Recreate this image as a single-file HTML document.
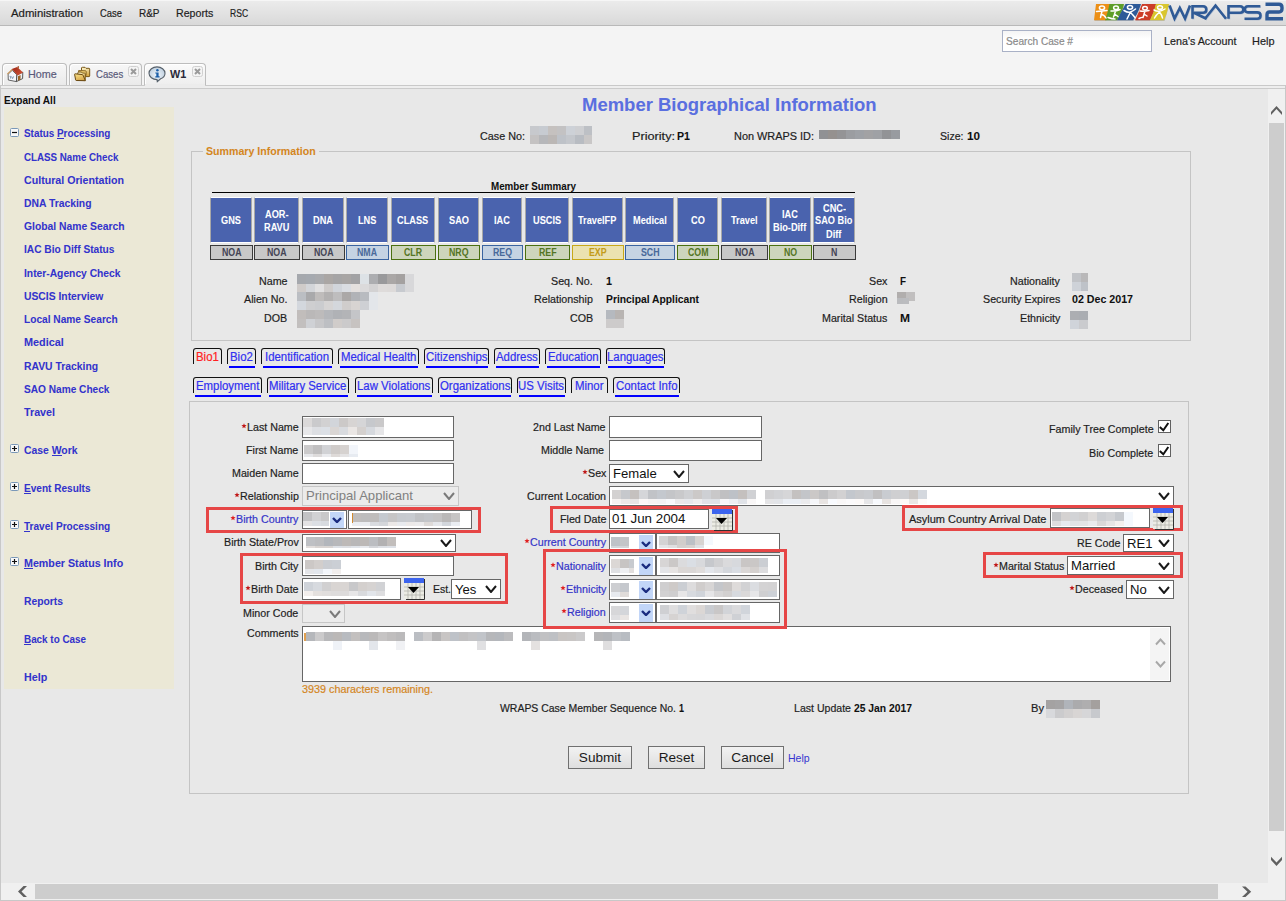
<!DOCTYPE html>
<html><head><meta charset="utf-8"><title>WRAPS</title>
<style>
html,body{margin:0;padding:0;width:1286px;height:901px;overflow:hidden;background:#f4f4f4}
body{position:relative;font-family:"Liberation Sans",sans-serif}
.t{position:absolute;white-space:nowrap;line-height:1;-webkit-text-stroke:0.2px currentColor}
.b{position:absolute;box-sizing:border-box}
</style></head><body>
<div class="b" style="left:0px;top:0px;width:1286px;height:26px;background:linear-gradient(#ececec,#d9d9d9);border-bottom:1px solid #b9b9b9"></div>
<div class="b" style="left:0px;top:0px;width:1286px;height:1px;background:#f6f6f6"></div>
<div class="t" style="left:11.00px;top:8px;font-size:11.5px;color:#1e1e1e;transform:scaleX(0.9882);transform-origin:0 0;">Administration</div>
<div class="t" style="left:100.00px;top:8px;font-size:11.5px;color:#1e1e1e;transform:scaleX(0.8195);transform-origin:0 0;">Case</div>
<div class="t" style="left:138.60px;top:8px;font-size:11.5px;color:#1e1e1e;transform:scaleX(0.8669);transform-origin:0 0;">R&amp;P</div>
<div class="t" style="left:175.70px;top:8px;font-size:11.5px;color:#1e1e1e;transform:scaleX(0.9239);transform-origin:0 0;">Reports</div>
<div class="t" style="left:229.90px;top:8px;font-size:11.5px;color:#1e1e1e;transform:scaleX(0.7454);transform-origin:0 0;">RSC</div>
<div class="b" style="left:0px;top:26px;width:1286px;height:59px;background:#f4f4f4"></div>
<svg class="b" style="left:1090px;top:0px" width="196" height="25" viewBox="0 0 196 25">
<g transform="translate(0.6,0.6)" opacity="0.25"><path d="M6 4 L20 4 Q21.5 8 19.5 12 L16.5 20.3 L4 20.3 Q5 12 6 4 Z M19.5 4 L34 4 L27 20.3 L15 20.3 Z M35.5 4 L51 4 L43 20.3 L27 20.3 Z M52 4 L66 4 L60 20.3 L45 20.3 Z M66 4 L79 4 L74 20.3 L60 20.3 Z" fill="#555"/></g>
<path d="M6 4 L20 4 Q21.5 8 19.5 12 L16.5 20.3 L4 20.3 Q5 12 6 4 Z" fill="#ec8f16"/>
<path d="M19.5 4 L34 4 Q33 9 31 13 L27 20.3 L15 20.3 Q18 12 19.5 4 Z" fill="#5c9d28"/>
<path d="M35.5 4 L51 4 Q49 10 47 14 L43 20.3 L27 20.3 Q31 12 35.5 4 Z" fill="#2d5a98"/>
<path d="M52 4 L66 4 Q65 9 63 14 L60 20.3 L45 20.3 Q49 12 52 4 Z" fill="#cc3d28"/>
<path d="M66 4 L79 4 Q78 9 76.5 14 L74 20.3 L60 20.3 Q64 12 66 4 Z" fill="#d9c62e"/>
<g stroke="#fff" stroke-width="1.5" fill="none" stroke-linecap="round">
<ellipse cx="12" cy="7.8" rx="2.6" ry="1.9"/><path d="M6.5 11.5 Q12 11 17 10.5 M12 11.3 L10.5 17.5 M11 14.5 Q14 14.5 16 18"/>
<ellipse cx="26" cy="7.8" rx="2.4" ry="1.8"/><path d="M21 11 Q26 11.5 30 9.5 M25.5 11.2 L23.5 17 M24.5 14 L28 16.5 M18 17.5 Q22 19 25 19"/>
<ellipse cx="40" cy="7.3" rx="2.6" ry="1.9"/><path d="M34 10.5 Q38 13 40.5 12 Q43 11 45.5 9 M40.5 12 L37 19 M40.5 12.5 Q43 15 45 17.5"/>
<ellipse cx="55" cy="8.3" rx="2.3" ry="1.7"/><path d="M50 11 Q55 11.5 59 10.5 M55 11 L53 17.5 M54 14 L57 16 M49 18.5 Q52 17 53 17.5"/>
<ellipse cx="70" cy="7.5" rx="2.5" ry="1.8"/><path d="M64 10 Q69 13 75 9 M69.5 12 Q66 15 64.5 18 M69.5 12 Q72 15 72.5 18"/>
</g>
<g stroke="#3f6aa6" stroke-width="1" opacity="0.25" fill="none" transform="translate(0.7,0.7)">
<path d="M79.5 5.5 L84.5 18.5 L89.8 8 L95 18.5 L100 5.5 M102.5 18.7 V6.2 H113 Q116.3 6.2 116.3 9.5 Q116.3 12.8 113 12.8 H104 L116.5 18.7 M115 18.7 L125.5 5.5 L136 18.7 M138.5 18.7 V6.2 H150 Q153.3 6.2 153.3 9.5 Q153.3 12.8 150 12.8 H139.5 M170.3 6.2 H158 Q154.8 6.2 154.8 9.4 Q154.8 12.4 158 12.4 H167.2 Q170.5 12.4 170.5 15.5 Q170.5 18.7 167.2 18.7 H154.5" stroke-width="2.2"/>
</g>
<g stroke="#2f5a96" stroke-width="2.6" fill="none" stroke-linejoin="miter">
<path d="M79.5 5.5 L84.5 18.5 L89.8 8 L95 18.5 L100 5.5"/>
<path d="M102.5 18.7 V6.2 H113 Q116.3 6.2 116.3 9.5 Q116.3 12.8 113 12.8 H104 L116.5 18.7"/>
<path d="M115 18.7 L125.5 5.5 L136 18.7"/>
<path d="M138.5 18.7 V6.2 H150 Q153.3 6.2 153.3 9.5 Q153.3 12.8 150 12.8 H139.5"/>
<path d="M170.3 6.2 H158 Q154.8 6.2 154.8 9.4 Q154.8 12.4 158 12.4 H167.2 Q170.5 12.4 170.5 15.5 Q170.5 18.7 167.2 18.7 H154.5"/>
<path d="M175.5 4.3 H189 Q192 4.3 192 7.5 V8.8 Q192 12 189 12 H179.5 Q177 12 177 14.8 V18.8 H193" stroke-width="3.4"/>
</g>
</svg>
<div class="b" style="left:1002px;top:30px;width:150px;height:22px;background:linear-gradient(#f4f4f4,#fff 40%);border:1px solid #a9b1c6;box-sizing:border-box"></div>
<div class="t" style="left:1006.00px;top:36px;font-size:11.5px;color:#8a8a8a;transform:scaleX(0.8808);transform-origin:0 0;">Search Case #</div>
<div class="t" style="left:1163.80px;top:36px;font-size:11.5px;color:#1e1e1e;transform:scaleX(0.9338);transform-origin:0 0;">Lena's Account</div>
<div class="t" style="left:1252.40px;top:36px;font-size:11.5px;color:#1e1e1e;transform:scaleX(0.9514);transform-origin:0 0;">Help</div>
<div class="b" style="left:2px;top:63px;width:65px;height:23px;background:linear-gradient(#f7f7f7,#e9e9e9);border:1px solid #bdbdbd;border-bottom:none;border-radius:4px 4px 0 0;box-sizing:border-box;box-shadow:inset 1px 1px 0 #fff"></div>
<div class="b" style="left:69px;top:63px;width:73px;height:23px;background:linear-gradient(#f7f7f7,#e9e9e9);border:1px solid #bdbdbd;border-bottom:none;border-radius:4px 4px 0 0;box-sizing:border-box;box-shadow:inset 1px 1px 0 #fff"></div>
<div class="b" style="left:144px;top:63px;width:62px;height:23px;background:linear-gradient(#fbfbfb,#ededed);border:1px solid #bdbdbd;border-bottom:none;border-radius:4px 4px 0 0;box-sizing:border-box;box-shadow:inset 1px 1px 0 #fff"></div>
<div class="t" style="left:28.20px;top:69px;font-size:11.5px;color:#5a5a7a;transform:scaleX(0.9389);transform-origin:0 0;">Home</div>
<div class="t" style="left:95.50px;top:69px;font-size:11.5px;color:#5a5a7a;transform:scaleX(0.8345);transform-origin:0 0;">Cases</div>
<div class="t" style="left:169.90px;top:69px;font-size:11.5px;color:#2a2a3a;font-weight:bold;-webkit-text-stroke:0.05px currentColor;transform:scaleX(0.9391);transform-origin:0 0;">W1</div>
<svg class="b" style="left:128px;top:66px" width="11" height="11" viewBox="0 0 11 11"><rect x="0.5" y="0.5" width="10" height="10" rx="2" fill="#f4f4f4" stroke="#d0d0d0"/><path d="M3 3 L8 8 M8 3 L3 8" stroke="#9a9a9a" stroke-width="2"/></svg>
<svg class="b" style="left:192px;top:66px" width="11" height="11" viewBox="0 0 11 11"><rect x="0.5" y="0.5" width="10" height="10" rx="2" fill="#f4f4f4" stroke="#d0d0d0"/><path d="M3 3 L8 8 M8 3 L3 8" stroke="#9a9a9a" stroke-width="2"/></svg>
<svg class="b" style="left:4px;top:63px" width="26" height="22" viewBox="0 0 26 22">
<defs><linearGradient id="roofg" x1="0" y1="0" x2="1" y2="1"><stop offset="0" stop-color="#9c2414"/><stop offset="1" stop-color="#d4583a"/></linearGradient></defs>
<path d="M4.1 11.2 L8.2 7.3 L12.9 11.8 L12.4 18.6 L4.3 17 Z" fill="#f5f7fb" stroke="#555" stroke-width="0.9"/>
<path d="M12.9 11.8 L18.8 9.2 L18.6 15.6 L12.4 18.6 Z" fill="#eef0f4" stroke="#444" stroke-width="0.9"/>
<path d="M14 13.2 L16.6 12 L16.5 16.6 L13.9 17.8 Z" fill="#9a6428"/>
<path d="M2.9 10.7 L7.8 5.9 L8.8 6.8 L3.8 11.6 Z" fill="#c8965c"/>
<path d="M7.8 5.9 L13.2 3.9 L19 9.6 L13.6 12.5 Z" fill="url(#roofg)"/>
<rect x="13.6" y="3.1" width="1.4" height="2.6" fill="#b0643e"/>
<path d="M5.6 13.4 H6.6 V15.6 M7.6 13.4 L8.6 15.6 L9.6 13.4" stroke="#7890a8" stroke-width="0.9" fill="none"/>
</svg>
<svg class="b" style="left:70px;top:63px" width="26" height="22" viewBox="0 0 26 22">
<defs><linearGradient id="fldg" x1="0" y1="0" x2="0.3" y2="1"><stop offset="0" stop-color="#fffbd8"/><stop offset="1" stop-color="#d4a848"/></linearGradient>
<linearGradient id="fldf" x1="0" y1="0" x2="0.4" y2="1"><stop offset="0" stop-color="#fce488"/><stop offset="1" stop-color="#d8aa50"/></linearGradient></defs>
<path d="M11.5 5 Q11.5 4.3 12.3 4.3 L15 4.3 L16 5.3 L19 5.3 Q19.7 5.3 19.7 6 L19.7 13 Q19.7 13.6 19 13.6 L15.5 13.6 L11.5 7 Z" fill="url(#fldg)" stroke="#7a5818" stroke-width="1"/>
<path d="M8.6 7.6 L15.5 7.8 Q16.2 7.9 16.2 8.6 L16 12.5 L9 12 Z" fill="#f4d478" stroke="#7a5818" stroke-width="0.9"/>
<path d="M8 9.6 Q8 9 8.7 9 L11.4 9 L12.4 10 L14.6 10.1 Q15.3 10.1 15.3 10.8 L15.2 17.6 L6 17.2 Z" fill="url(#fldg)" stroke="#7a5818" stroke-width="1"/>
<path d="M4.6 11.3 Q4.6 10.8 5.2 10.8 L12.2 11.6 Q12.9 11.7 13.1 12.3 L15.3 17.7 L6.5 17.5 Q5.8 17.5 5.6 16.8 Z" fill="url(#fldf)" stroke="#6a4a14" stroke-width="1"/>
</svg>
<svg class="b" style="left:148px;top:66px" width="19" height="17" viewBox="0 0 19 17">
<defs><radialGradient id="infg" cx="0.5" cy="0.55" r="0.6"><stop offset="0" stop-color="#f0f5fa"/><stop offset="1" stop-color="#b8cadb"/></radialGradient></defs>
<path d="M9 13.6 C4.6 13.6 1 10.8 1 7.3 C1 3.8 4.6 0.9 9 0.9 C13.4 0.9 17 3.8 17 7.3 C17 9.8 15.2 11.9 12.6 12.8 L9.3 15.6 Z" fill="url(#infg)" stroke="#56606a" stroke-width="1.1"/>
<circle cx="9.4" cy="4.3" r="1.25" fill="#1a5ea8"/>
<path d="M7.3 6.4 L10.6 6.4 L10.6 10.3 L11.6 10.3 L11.6 11.4 L7.3 11.4 L7.3 10.3 L8.3 10.3 L8.3 7.4 L7.3 7.4 Z" fill="#1a5ea8"/>
</svg>
<div class="b" style="left:0px;top:85px;width:1286px;height:816px;background:#e8e8e8"></div>
<div class="b" style="left:0px;top:85px;width:1286px;height:1px;background:#c9c9c9"></div>
<div class="b" style="left:0px;top:86px;width:1286px;height:2px;background:#eeeeee"></div>
<div class="b" style="left:0px;top:88px;width:1286px;height:1px;background:#cbcbcb"></div>
<div class="b" style="left:0px;top:85px;width:1px;height:816px;background:#c8c8c8"></div>
<div class="b" style="left:1285px;top:85px;width:1px;height:816px;background:#c8c8c8"></div>
<div class="b" style="left:0px;top:900px;width:1286px;height:1px;background:#c8c8c8"></div>
<div class="b" style="left:145px;top:84px;width:60px;height:4px;background:#ececec"></div>
<div class="b" style="left:1268px;top:89px;width:17px;height:794px;background:#f0f0f0"></div>
<div class="b" style="left:1269px;top:123px;width:15px;height:708px;background:#cdcdcd"></div>
<svg class="b" style="left:1268px;top:100px" width="17" height="17" viewBox="0 0 17 17"><path d="M3 12 L8.5 6 L14 12 L14 15 L8.5 9 L3 15 Z" fill="#606060"/></svg>
<svg class="b" style="left:1268px;top:852px" width="17" height="17" viewBox="0 0 17 17"><path d="M3 4.7 L8.5 10.5 L14 4.7 L14 8 L8.5 14 L3 8 Z" fill="#606060"/></svg>
<div class="b" style="left:1px;top:883px;width:1267px;height:17px;background:#f0f0f0"></div>
<div class="b" style="left:35px;top:884px;width:1183px;height:15px;background:#cdcdcd"></div>
<svg class="b" style="left:14px;top:883px" width="17" height="17" viewBox="0 0 17 17"><path d="M13 3 L9.5 3 L4 8.5 L9.5 14 L13 14 L7.5 8.5 Z" fill="#606060"/></svg>
<svg class="b" style="left:1238px;top:883px" width="17" height="17" viewBox="0 0 17 17"><path d="M4 3.5 L7.5 3.5 L13.2 8.7 L7.5 14 L4 14 L9.5 8.7 Z" fill="#606060"/></svg>
<div class="b" style="left:1268px;top:883px;width:17px;height:17px;background:#f0f0f0"></div>
<div class="t" style="left:4.30px;top:95px;font-size:11.5px;color:#101010;font-weight:bold;-webkit-text-stroke:0.05px currentColor;transform:scaleX(0.8763);transform-origin:0 0;">Expand All</div>
<div class="b" style="left:4px;top:107px;width:170px;height:582px;background:#ebe8d6"></div>
<div class="t" style="left:24.00px;top:128px;font-size:11px;color:#3333cc;font-weight:bold;-webkit-text-stroke:0.05px currentColor;transform:scaleX(0.8992);transform-origin:0 0;">Status Processing</div>
<svg class="b" style="left:10px;top:128px" width="9" height="9" viewBox="0 0 9 9"><rect x="0.5" y="0.5" width="8" height="8" rx="1" fill="#f8f8f8" stroke="#7a98b8"/><path d="M2 4.5 H7" stroke="#101010" stroke-width="1.2"/></svg>
<div class="b" style="left:57px;top:138px;width:7px;height:1px;background:#3333cc"></div>
<div class="t" style="left:24.00px;top:152px;font-size:11px;color:#3333cc;font-weight:bold;-webkit-text-stroke:0.05px currentColor;transform:scaleX(0.8866);transform-origin:0 0;">CLASS Name Check</div>
<div class="t" style="left:24.00px;top:175px;font-size:11px;color:#3333cc;font-weight:bold;-webkit-text-stroke:0.05px currentColor;transform:scaleX(0.9673);transform-origin:0 0;">Cultural Orientation</div>
<div class="t" style="left:24.00px;top:198px;font-size:11px;color:#3333cc;font-weight:bold;-webkit-text-stroke:0.05px currentColor;transform:scaleX(0.9412);transform-origin:0 0;">DNA Tracking</div>
<div class="t" style="left:24.00px;top:221px;font-size:11px;color:#3333cc;font-weight:bold;-webkit-text-stroke:0.05px currentColor;transform:scaleX(0.9403);transform-origin:0 0;">Global Name Search</div>
<div class="t" style="left:24.00px;top:244px;font-size:11px;color:#3333cc;font-weight:bold;-webkit-text-stroke:0.05px currentColor;transform:scaleX(0.9256);transform-origin:0 0;">IAC Bio Diff Status</div>
<div class="t" style="left:24.00px;top:268px;font-size:11px;color:#3333cc;font-weight:bold;-webkit-text-stroke:0.05px currentColor;transform:scaleX(0.9342);transform-origin:0 0;">Inter-Agency Check</div>
<div class="t" style="left:24.00px;top:291px;font-size:11px;color:#3333cc;font-weight:bold;-webkit-text-stroke:0.05px currentColor;transform:scaleX(0.9401);transform-origin:0 0;">USCIS Interview</div>
<div class="t" style="left:24.00px;top:314px;font-size:11px;color:#3333cc;font-weight:bold;-webkit-text-stroke:0.05px currentColor;transform:scaleX(0.9233);transform-origin:0 0;">Local Name Search</div>
<div class="t" style="left:24.00px;top:337px;font-size:11px;color:#3333cc;font-weight:bold;-webkit-text-stroke:0.05px currentColor;transform:scaleX(0.9865);transform-origin:0 0;">Medical</div>
<div class="t" style="left:24.00px;top:361px;font-size:11px;color:#3333cc;font-weight:bold;-webkit-text-stroke:0.05px currentColor;transform:scaleX(0.9422);transform-origin:0 0;">RAVU Tracking</div>
<div class="t" style="left:24.00px;top:384px;font-size:11px;color:#3333cc;font-weight:bold;-webkit-text-stroke:0.05px currentColor;transform:scaleX(0.9201);transform-origin:0 0;">SAO Name Check</div>
<div class="t" style="left:24.00px;top:407px;font-size:11px;color:#3333cc;font-weight:bold;-webkit-text-stroke:0.05px currentColor;transform:scaleX(0.9748);transform-origin:0 0;">Travel</div>
<div class="t" style="left:24.00px;top:445px;font-size:11px;color:#3333cc;font-weight:bold;-webkit-text-stroke:0.05px currentColor;transform:scaleX(0.9444);transform-origin:0 0;">Case Work</div>
<svg class="b" style="left:10px;top:444px" width="9" height="9" viewBox="0 0 9 9"><rect x="0.5" y="0.5" width="8" height="8" rx="1" fill="#f8f8f8" stroke="#7a98b8"/><path d="M2 4.5 H7 M4.5 2 V7" stroke="#101010" stroke-width="1.2"/></svg>
<div class="b" style="left:52px;top:455px;width:10px;height:1px;background:#3333cc"></div>
<div class="t" style="left:24.00px;top:483px;font-size:11px;color:#3333cc;font-weight:bold;-webkit-text-stroke:0.05px currentColor;transform:scaleX(0.9142);transform-origin:0 0;">Event Results</div>
<svg class="b" style="left:10px;top:482px" width="9" height="9" viewBox="0 0 9 9"><rect x="0.5" y="0.5" width="8" height="8" rx="1" fill="#f8f8f8" stroke="#7a98b8"/><path d="M2 4.5 H7 M4.5 2 V7" stroke="#101010" stroke-width="1.2"/></svg>
<div class="b" style="left:24px;top:493px;width:7px;height:1px;background:#3333cc"></div>
<div class="t" style="left:24.00px;top:521px;font-size:11px;color:#3333cc;font-weight:bold;-webkit-text-stroke:0.05px currentColor;transform:scaleX(0.9155);transform-origin:0 0;">Travel Processing</div>
<svg class="b" style="left:10px;top:520px" width="9" height="9" viewBox="0 0 9 9"><rect x="0.5" y="0.5" width="8" height="8" rx="1" fill="#f8f8f8" stroke="#7a98b8"/><path d="M2 4.5 H7 M4.5 2 V7" stroke="#101010" stroke-width="1.2"/></svg>
<div class="b" style="left:24px;top:531px;width:6px;height:1px;background:#3333cc"></div>
<div class="t" style="left:24.00px;top:558px;font-size:11px;color:#3333cc;font-weight:bold;-webkit-text-stroke:0.05px currentColor;transform:scaleX(0.9720);transform-origin:0 0;">Member Status Info</div>
<svg class="b" style="left:10px;top:557px" width="9" height="9" viewBox="0 0 9 9"><rect x="0.5" y="0.5" width="8" height="8" rx="1" fill="#f8f8f8" stroke="#7a98b8"/><path d="M2 4.5 H7 M4.5 2 V7" stroke="#101010" stroke-width="1.2"/></svg>
<div class="b" style="left:24px;top:568px;width:9px;height:1px;background:#3333cc"></div>
<div class="t" style="left:24.00px;top:596px;font-size:11px;color:#3333cc;font-weight:bold;-webkit-text-stroke:0.05px currentColor;transform:scaleX(0.9384);transform-origin:0 0;">Reports</div>
<div class="t" style="left:24.00px;top:634px;font-size:11px;color:#3333cc;font-weight:bold;-webkit-text-stroke:0.05px currentColor;transform:scaleX(0.8975);transform-origin:0 0;">Back to Case</div>
<div class="b" style="left:24px;top:644px;width:7px;height:1px;background:#3333cc"></div>
<div class="t" style="left:24.00px;top:672px;font-size:11px;color:#3333cc;font-weight:bold;-webkit-text-stroke:0.05px currentColor;transform:scaleX(0.9733);transform-origin:0 0;">Help</div>
<div class="t" style="left:582.40px;top:95px;font-size:19px;color:#5a6fe0;font-weight:bold;-webkit-text-stroke:0.05px currentColor;transform:scaleX(0.9724);transform-origin:0 0;">Member Biographical Information</div>
<div class="t" style="left:480.00px;top:131px;font-size:11.5px;color:#1e1e1e;transform:scaleX(0.9388);transform-origin:0 0;">Case No:</div>
<div class="b" style="left:530px;top:126px;width:9px;height:9px;background:#c7c9cd"></div>
<div class="b" style="left:539px;top:126px;width:9px;height:9px;background:#c7cbd1"></div>
<div class="b" style="left:548px;top:126px;width:9px;height:9px;background:#c5c1bf"></div>
<div class="b" style="left:557px;top:126px;width:9px;height:9px;background:#c3c2c3"></div>
<div class="b" style="left:566px;top:126px;width:9px;height:9px;background:#cdd1d7"></div>
<div class="b" style="left:575px;top:126px;width:9px;height:9px;background:#cecfd2"></div>
<div class="b" style="left:584px;top:126px;width:8px;height:9px;background:#bdc0c5"></div>
<div class="b" style="left:530px;top:135px;width:9px;height:9px;background:#c4c2c2"></div>
<div class="b" style="left:539px;top:135px;width:9px;height:9px;background:#b6b7ba"></div>
<div class="b" style="left:548px;top:135px;width:9px;height:9px;background:#bbb7b5"></div>
<div class="b" style="left:557px;top:135px;width:9px;height:9px;background:#bec2c8"></div>
<div class="b" style="left:566px;top:135px;width:9px;height:9px;background:#c4c7cc"></div>
<div class="b" style="left:575px;top:135px;width:9px;height:9px;background:#b8bcc2"></div>
<div class="b" style="left:584px;top:135px;width:8px;height:9px;background:#c9c7c7"></div>
<div class="t" style="left:631.60px;top:131px;font-size:11.5px;color:#1e1e1e;transform:scaleX(1.1033);transform-origin:0 0;">Priority:</div>
<div class="t" style="left:677.00px;top:131px;font-size:11.5px;color:#101010;font-weight:bold;-webkit-text-stroke:0.05px currentColor;transform:scaleX(0.9242);transform-origin:0 0;">P1</div>
<div class="t" style="left:733.50px;top:131px;font-size:11.5px;color:#1e1e1e;transform:scaleX(0.9484);transform-origin:0 0;">Non WRAPS ID:</div>
<div class="b" style="left:819px;top:130px;width:9px;height:9px;background:#909194"></div>
<div class="b" style="left:828px;top:130px;width:9px;height:9px;background:#95918f"></div>
<div class="b" style="left:837px;top:130px;width:9px;height:9px;background:#949496"></div>
<div class="b" style="left:846px;top:130px;width:9px;height:9px;background:#9b9da1"></div>
<div class="b" style="left:855px;top:130px;width:9px;height:9px;background:#9ea1a6"></div>
<div class="b" style="left:864px;top:130px;width:9px;height:9px;background:#a2a2a4"></div>
<div class="b" style="left:873px;top:130px;width:9px;height:9px;background:#9fa1a5"></div>
<div class="b" style="left:882px;top:130px;width:9px;height:9px;background:#929396"></div>
<div class="b" style="left:891px;top:130px;width:9px;height:9px;background:#989ba0"></div>
<div class="t" style="left:940.00px;top:131px;font-size:11.5px;color:#1e1e1e;transform:scaleX(0.9192);transform-origin:0 0;">Size:</div>
<div class="t" style="left:967.00px;top:131px;font-size:11.5px;color:#101010;font-weight:bold;-webkit-text-stroke:0.05px currentColor;transform:scaleX(1.0164);transform-origin:0 0;">10</div>
<div class="b" style="left:191px;top:151px;width:1000px;height:190px;border:1px solid #c4c4c4"></div>
<div class="b" style="left:203px;top:145px;width:116px;height:13px;background:#e8e8e8"></div>
<div class="t" style="left:206.00px;top:146px;font-size:11.5px;color:#d4861e;font-weight:bold;-webkit-text-stroke:0.05px currentColor;transform:scaleX(0.9222);transform-origin:0 0;">Summary Information</div>
<div class="t" style="left:490.70px;top:182px;font-size:10px;color:#101010;font-weight:bold;-webkit-text-stroke:0.05px currentColor;transform:scaleX(0.9804);transform-origin:0 0;">Member Summary</div>
<div class="b" style="left:212px;top:192px;width:643px;height:1px;background:#000"></div>
<div class="b" style="left:210px;top:197px;width:42px;height:46px;background:#4a63ae;border-left:1px solid #a8a8a8;border-right:1px solid #a8a8a8;border-top:1px solid #fff;border-bottom:1px solid #fff"></div>
<div class="t" style="left:221.03px;top:216px;font-size:10px;color:#ffffff;font-weight:bold;-webkit-text-stroke:0.05px currentColor;transform:scaleX(0.9200);transform-origin:0 0;">GNS</div>
<div class="b" style="left:210px;top:245px;width:43px;height:15px;background:#c8c8c8;border:1px solid #3a3a3a"></div>
<div class="t" style="left:221.72px;top:248px;font-size:10px;color:#444454;font-weight:bold;-webkit-text-stroke:0.05px currentColor;transform:scaleX(0.8800);transform-origin:0 0;">NOA</div>
<div class="b" style="left:254px;top:197px;width:45px;height:46px;background:#4a63ae;border-left:1px solid #a8a8a8;border-right:1px solid #a8a8a8;border-top:1px solid #fff;border-bottom:1px solid #fff"></div>
<div class="t" style="left:264.75px;top:210px;font-size:10px;color:#ffffff;font-weight:bold;-webkit-text-stroke:0.05px currentColor;transform:scaleX(0.9200);transform-origin:0 0;">AOR-</div>
<div class="t" style="left:263.81px;top:223px;font-size:10px;color:#ffffff;font-weight:bold;-webkit-text-stroke:0.05px currentColor;transform:scaleX(0.9200);transform-origin:0 0;">RAVU</div>
<div class="b" style="left:254px;top:245px;width:46px;height:15px;background:#c8c8c8;border:1px solid #3a3a3a"></div>
<div class="t" style="left:267.22px;top:248px;font-size:10px;color:#444454;font-weight:bold;-webkit-text-stroke:0.05px currentColor;transform:scaleX(0.8800);transform-origin:0 0;">NOA</div>
<div class="b" style="left:302px;top:197px;width:42px;height:46px;background:#4a63ae;border-left:1px solid #a8a8a8;border-right:1px solid #a8a8a8;border-top:1px solid #fff;border-bottom:1px solid #fff"></div>
<div class="t" style="left:313.03px;top:216px;font-size:10px;color:#ffffff;font-weight:bold;-webkit-text-stroke:0.05px currentColor;transform:scaleX(0.9200);transform-origin:0 0;">DNA</div>
<div class="b" style="left:302px;top:245px;width:43px;height:15px;background:#c8c8c8;border:1px solid #3a3a3a"></div>
<div class="t" style="left:313.72px;top:248px;font-size:10px;color:#444454;font-weight:bold;-webkit-text-stroke:0.05px currentColor;transform:scaleX(0.8800);transform-origin:0 0;">NOA</div>
<div class="b" style="left:346px;top:197px;width:42px;height:46px;background:#4a63ae;border-left:1px solid #a8a8a8;border-right:1px solid #a8a8a8;border-top:1px solid #fff;border-bottom:1px solid #fff"></div>
<div class="t" style="left:357.80px;top:216px;font-size:10px;color:#ffffff;font-weight:bold;-webkit-text-stroke:0.05px currentColor;transform:scaleX(0.9200);transform-origin:0 0;">LNS</div>
<div class="b" style="left:346px;top:245px;width:43px;height:15px;background:#c5d3e3;border:1px solid #3a64a0"></div>
<div class="t" style="left:357.48px;top:248px;font-size:10px;color:#4a6a9a;font-weight:bold;-webkit-text-stroke:0.05px currentColor;transform:scaleX(0.8800);transform-origin:0 0;">NMA</div>
<div class="b" style="left:391px;top:197px;width:44px;height:46px;background:#4a63ae;border-left:1px solid #a8a8a8;border-right:1px solid #a8a8a8;border-top:1px solid #fff;border-bottom:1px solid #fff"></div>
<div class="t" style="left:397.41px;top:216px;font-size:10px;color:#ffffff;font-weight:bold;-webkit-text-stroke:0.05px currentColor;transform:scaleX(0.9200);transform-origin:0 0;">CLASS</div>
<div class="b" style="left:391px;top:245px;width:45px;height:15px;background:#cdd5bc;border:1px solid #4a7010"></div>
<div class="t" style="left:404.46px;top:248px;font-size:10px;color:#557525;font-weight:bold;-webkit-text-stroke:0.05px currentColor;transform:scaleX(0.8800);transform-origin:0 0;">CLR</div>
<div class="b" style="left:438px;top:197px;width:41px;height:46px;background:#4a63ae;border-left:1px solid #a8a8a8;border-right:1px solid #a8a8a8;border-top:1px solid #fff;border-bottom:1px solid #fff"></div>
<div class="t" style="left:448.53px;top:216px;font-size:10px;color:#ffffff;font-weight:bold;-webkit-text-stroke:0.05px currentColor;transform:scaleX(0.9200);transform-origin:0 0;">SAO</div>
<div class="b" style="left:438px;top:245px;width:42px;height:15px;background:#cdd5bc;border:1px solid #4a7010"></div>
<div class="t" style="left:449.22px;top:248px;font-size:10px;color:#557525;font-weight:bold;-webkit-text-stroke:0.05px currentColor;transform:scaleX(0.8800);transform-origin:0 0;">NRQ</div>
<div class="b" style="left:482px;top:197px;width:40px;height:46px;background:#4a63ae;border-left:1px solid #a8a8a8;border-right:1px solid #a8a8a8;border-top:1px solid #fff;border-bottom:1px solid #fff"></div>
<div class="t" style="left:494.08px;top:216px;font-size:10px;color:#ffffff;font-weight:bold;-webkit-text-stroke:0.05px currentColor;transform:scaleX(0.9200);transform-origin:0 0;">IAC</div>
<div class="b" style="left:482px;top:245px;width:41px;height:15px;background:#c5d3e3;border:1px solid #3a64a0"></div>
<div class="t" style="left:492.97px;top:248px;font-size:10px;color:#4a6a9a;font-weight:bold;-webkit-text-stroke:0.05px currentColor;transform:scaleX(0.8800);transform-origin:0 0;">REQ</div>
<div class="b" style="left:525px;top:197px;width:44px;height:46px;background:#4a63ae;border-left:1px solid #a8a8a8;border-right:1px solid #a8a8a8;border-top:1px solid #fff;border-bottom:1px solid #fff"></div>
<div class="t" style="left:532.94px;top:216px;font-size:10px;color:#ffffff;font-weight:bold;-webkit-text-stroke:0.05px currentColor;transform:scaleX(0.9200);transform-origin:0 0;">USCIS</div>
<div class="b" style="left:525px;top:245px;width:45px;height:15px;background:#cdd5bc;border:1px solid #4a7010"></div>
<div class="t" style="left:538.70px;top:248px;font-size:10px;color:#557525;font-weight:bold;-webkit-text-stroke:0.05px currentColor;transform:scaleX(0.8800);transform-origin:0 0;">REF</div>
<div class="b" style="left:572px;top:197px;width:51px;height:46px;background:#4a63ae;border-left:1px solid #a8a8a8;border-right:1px solid #a8a8a8;border-top:1px solid #fff;border-bottom:1px solid #fff"></div>
<div class="t" style="left:578.32px;top:216px;font-size:10px;color:#ffffff;font-weight:bold;-webkit-text-stroke:0.05px currentColor;transform:scaleX(0.9200);transform-origin:0 0;">TravelFP</div>
<div class="b" style="left:572px;top:245px;width:52px;height:15px;background:#ebe2b0;border:1px solid #c8a818"></div>
<div class="t" style="left:589.20px;top:248px;font-size:10px;color:#c49c18;font-weight:bold;-webkit-text-stroke:0.05px currentColor;transform:scaleX(0.8800);transform-origin:0 0;">EXP</div>
<div class="b" style="left:625px;top:197px;width:49px;height:46px;background:#4a63ae;border-left:1px solid #a8a8a8;border-right:1px solid #a8a8a8;border-top:1px solid #fff;border-bottom:1px solid #fff"></div>
<div class="t" style="left:632.63px;top:216px;font-size:10px;color:#ffffff;font-weight:bold;-webkit-text-stroke:0.05px currentColor;transform:scaleX(0.9200);transform-origin:0 0;">Medical</div>
<div class="b" style="left:625px;top:245px;width:50px;height:15px;background:#c5d3e3;border:1px solid #3a64a0"></div>
<div class="t" style="left:640.71px;top:248px;font-size:10px;color:#4a6a9a;font-weight:bold;-webkit-text-stroke:0.05px currentColor;transform:scaleX(0.8800);transform-origin:0 0;">SCH</div>
<div class="b" style="left:677px;top:197px;width:41px;height:46px;background:#4a63ae;border-left:1px solid #a8a8a8;border-right:1px solid #a8a8a8;border-top:1px solid #fff;border-bottom:1px solid #fff"></div>
<div class="t" style="left:690.60px;top:216px;font-size:10px;color:#ffffff;font-weight:bold;-webkit-text-stroke:0.05px currentColor;transform:scaleX(0.9200);transform-origin:0 0;">CO</div>
<div class="b" style="left:677px;top:245px;width:42px;height:15px;background:#cdd5bc;border:1px solid #4a7010"></div>
<div class="t" style="left:687.73px;top:248px;font-size:10px;color:#557525;font-weight:bold;-webkit-text-stroke:0.05px currentColor;transform:scaleX(0.8800);transform-origin:0 0;">COM</div>
<div class="b" style="left:721px;top:197px;width:46px;height:46px;background:#4a63ae;border-left:1px solid #a8a8a8;border-right:1px solid #a8a8a8;border-top:1px solid #fff;border-bottom:1px solid #fff"></div>
<div class="t" style="left:730.70px;top:216px;font-size:10px;color:#ffffff;font-weight:bold;-webkit-text-stroke:0.05px currentColor;transform:scaleX(0.9200);transform-origin:0 0;">Travel</div>
<div class="b" style="left:721px;top:245px;width:47px;height:15px;background:#c8c8c8;border:1px solid #3a3a3a"></div>
<div class="t" style="left:734.72px;top:248px;font-size:10px;color:#444454;font-weight:bold;-webkit-text-stroke:0.05px currentColor;transform:scaleX(0.8800);transform-origin:0 0;">NOA</div>
<div class="b" style="left:769px;top:197px;width:42px;height:46px;background:#4a63ae;border-left:1px solid #a8a8a8;border-right:1px solid #a8a8a8;border-top:1px solid #fff;border-bottom:1px solid #fff"></div>
<div class="t" style="left:782.08px;top:210px;font-size:10px;color:#ffffff;font-weight:bold;-webkit-text-stroke:0.05px currentColor;transform:scaleX(0.9200);transform-origin:0 0;">IAC</div>
<div class="t" style="left:773.40px;top:223px;font-size:10px;color:#ffffff;font-weight:bold;-webkit-text-stroke:0.05px currentColor;transform:scaleX(0.9200);transform-origin:0 0;">Bio-Diff</div>
<div class="b" style="left:769px;top:245px;width:43px;height:15px;background:#cdd5bc;border:1px solid #4a7010"></div>
<div class="t" style="left:783.90px;top:248px;font-size:10px;color:#557525;font-weight:bold;-webkit-text-stroke:0.05px currentColor;transform:scaleX(0.8800);transform-origin:0 0;">NO</div>
<div class="b" style="left:813px;top:197px;width:42px;height:46px;background:#4a63ae;border-left:1px solid #a8a8a8;border-right:1px solid #a8a8a8;border-top:1px solid #fff;border-bottom:1px solid #fff"></div>
<div class="t" style="left:822.50px;top:204px;font-size:10px;color:#ffffff;font-weight:bold;-webkit-text-stroke:0.05px currentColor;transform:scaleX(0.9200);transform-origin:0 0;">CNC-</div>
<div class="t" style="left:815.34px;top:216px;font-size:10px;color:#ffffff;font-weight:bold;-webkit-text-stroke:0.05px currentColor;transform:scaleX(0.9200);transform-origin:0 0;">SAO Bio</div>
<div class="t" style="left:826.34px;top:230px;font-size:10px;color:#ffffff;font-weight:bold;-webkit-text-stroke:0.05px currentColor;transform:scaleX(0.9200);transform-origin:0 0;">Diff</div>
<div class="b" style="left:813px;top:245px;width:43px;height:15px;background:#c8c8c8;border:1px solid #3a3a3a"></div>
<div class="t" style="left:831.32px;top:248px;font-size:10px;color:#444454;font-weight:bold;-webkit-text-stroke:0.05px currentColor;transform:scaleX(0.8800);transform-origin:0 0;">N</div>
<div class="t" style="left:259.07px;top:276px;font-size:11.5px;color:#1e1e1e;transform:scaleX(0.9300);transform-origin:0 0;">Name</div>
<div class="t" style="left:244.21px;top:294px;font-size:11.5px;color:#1e1e1e;transform:scaleX(0.9300);transform-origin:0 0;">Alien No.</div>
<div class="t" style="left:264.42px;top:313px;font-size:11.5px;color:#1e1e1e;transform:scaleX(0.9300);transform-origin:0 0;">DOB</div>
<div class="b" style="left:297px;top:274px;width:9px;height:10px;background:#a5a8ad"></div>
<div class="b" style="left:306px;top:274px;width:9px;height:10px;background:#a5a9af"></div>
<div class="b" style="left:315px;top:274px;width:9px;height:10px;background:#a9aaad"></div>
<div class="b" style="left:324px;top:274px;width:9px;height:10px;background:#aaa6a4"></div>
<div class="b" style="left:333px;top:274px;width:9px;height:10px;background:#a5a4a5"></div>
<div class="b" style="left:342px;top:274px;width:9px;height:10px;background:#a8a5a4"></div>
<div class="b" style="left:351px;top:274px;width:9px;height:10px;background:#a2a2a4"></div>
<div class="b" style="left:360px;top:274px;width:9px;height:10px;background:#9c9ea2"></div>
<div class="b" style="left:369px;top:274px;width:9px;height:10px;background:#acadb0"></div>
<div class="b" style="left:378px;top:274px;width:9px;height:10px;background:#99999b"></div>
<div class="b" style="left:387px;top:274px;width:9px;height:10px;background:#aaa7a6"></div>
<div class="b" style="left:396px;top:274px;width:9px;height:10px;background:#a4a1a0"></div>
<div class="b" style="left:405px;top:274px;width:9px;height:10px;background:#9da0a5"></div>
<div class="b" style="left:297px;top:284px;width:9px;height:8px;background:#cfcbc9"></div>
<div class="b" style="left:306px;top:284px;width:9px;height:8px;background:#d3d5d9"></div>
<div class="b" style="left:315px;top:284px;width:9px;height:8px;background:#e1e0e1"></div>
<div class="b" style="left:324px;top:284px;width:9px;height:8px;background:#cfcccb"></div>
<div class="b" style="left:333px;top:284px;width:9px;height:8px;background:#d1d5db"></div>
<div class="b" style="left:342px;top:284px;width:9px;height:8px;background:#dadde2"></div>
<div class="b" style="left:351px;top:284px;width:9px;height:8px;background:#e4e0de"></div>
<div class="b" style="left:360px;top:284px;width:9px;height:8px;background:#dbdadb"></div>
<div class="b" style="left:369px;top:284px;width:9px;height:8px;background:#d3d2d3"></div>
<div class="b" style="left:378px;top:284px;width:9px;height:8px;background:#dedbda"></div>
<div class="b" style="left:387px;top:284px;width:9px;height:8px;background:#dddad9"></div>
<div class="b" style="left:396px;top:284px;width:9px;height:8px;background:#c7cacf"></div>
<div class="b" style="left:405px;top:284px;width:9px;height:8px;background:#d3d0cf"></div>
<div class="b" style="left:360px;top:274px;width:9px;height:10px;background:#dde2e6"></div>
<div class="b" style="left:405px;top:274px;width:9px;height:18px;background:#d8d8da"></div>
<div class="b" style="left:297px;top:292px;width:9px;height:9px;background:#bbbec3"></div>
<div class="b" style="left:306px;top:292px;width:9px;height:9px;background:#a9a9ab"></div>
<div class="b" style="left:315px;top:292px;width:9px;height:9px;background:#bfbcbb"></div>
<div class="b" style="left:324px;top:292px;width:9px;height:9px;background:#b3b1b1"></div>
<div class="b" style="left:333px;top:292px;width:9px;height:9px;background:#bebdbe"></div>
<div class="b" style="left:342px;top:292px;width:9px;height:9px;background:#aba8a7"></div>
<div class="b" style="left:351px;top:292px;width:9px;height:9px;background:#b1b3b7"></div>
<div class="b" style="left:360px;top:292px;width:9px;height:9px;background:#b8bbc0"></div>
<div class="b" style="left:297px;top:301px;width:9px;height:9px;background:#d3d7dd"></div>
<div class="b" style="left:306px;top:301px;width:9px;height:9px;background:#ceced0"></div>
<div class="b" style="left:315px;top:301px;width:9px;height:9px;background:#cbcccf"></div>
<div class="b" style="left:324px;top:301px;width:9px;height:9px;background:#d6d4d4"></div>
<div class="b" style="left:333px;top:301px;width:9px;height:9px;background:#d4d7dc"></div>
<div class="b" style="left:342px;top:301px;width:9px;height:9px;background:#d0cdcc"></div>
<div class="b" style="left:351px;top:301px;width:9px;height:9px;background:#d8d4d2"></div>
<div class="b" style="left:360px;top:301px;width:9px;height:9px;background:#ced0d4"></div>
<div class="b" style="left:369px;top:292px;width:9px;height:18px;background:#e3e6ea"></div>
<div class="b" style="left:297px;top:310px;width:9px;height:9px;background:#c1bdbb"></div>
<div class="b" style="left:306px;top:310px;width:9px;height:9px;background:#bab8b8"></div>
<div class="b" style="left:315px;top:310px;width:9px;height:9px;background:#bdbbbb"></div>
<div class="b" style="left:324px;top:310px;width:9px;height:9px;background:#b5b7bb"></div>
<div class="b" style="left:333px;top:310px;width:9px;height:9px;background:#b0b2b6"></div>
<div class="b" style="left:342px;top:310px;width:9px;height:9px;background:#b3b4b7"></div>
<div class="b" style="left:351px;top:310px;width:9px;height:9px;background:#c4c5c8"></div>
<div class="b" style="left:297px;top:319px;width:9px;height:9px;background:#c2bfbe"></div>
<div class="b" style="left:306px;top:319px;width:9px;height:9px;background:#cfd1d5"></div>
<div class="b" style="left:315px;top:319px;width:9px;height:9px;background:#c7c7c9"></div>
<div class="b" style="left:324px;top:319px;width:9px;height:9px;background:#bdbfc3"></div>
<div class="b" style="left:333px;top:319px;width:9px;height:9px;background:#d0ccca"></div>
<div class="b" style="left:342px;top:319px;width:9px;height:9px;background:#cbcacb"></div>
<div class="b" style="left:351px;top:319px;width:9px;height:9px;background:#c7c3c1"></div>
<div class="t" style="left:551.39px;top:276px;font-size:11.5px;color:#1e1e1e;transform:scaleX(0.9300);transform-origin:0 0;">Seq. No.</div>
<div class="t" style="left:534.14px;top:294px;font-size:11.5px;color:#1e1e1e;transform:scaleX(0.9300);transform-origin:0 0;">Relationship</div>
<div class="t" style="left:569.82px;top:313px;font-size:11.5px;color:#1e1e1e;transform:scaleX(0.9300);transform-origin:0 0;">COB</div>
<div class="t" style="left:606.00px;top:276px;font-size:11.5px;color:#101010;font-weight:bold;-webkit-text-stroke:0.05px currentColor;transform:scaleX(0.9382);transform-origin:0 0;">1</div>
<div class="t" style="left:606.00px;top:294px;font-size:11.5px;color:#101010;font-weight:bold;-webkit-text-stroke:0.05px currentColor;transform:scaleX(0.8966);transform-origin:0 0;">Principal Applicant</div>
<div class="b" style="left:606px;top:310px;width:9px;height:9px;background:#b5b9bf"></div>
<div class="b" style="left:615px;top:310px;width:9px;height:9px;background:#b8b4b2"></div>
<div class="b" style="left:606px;top:319px;width:9px;height:9px;background:#cdcbcb"></div>
<div class="b" style="left:615px;top:319px;width:9px;height:9px;background:#cdcbcb"></div>
<div class="t" style="left:869.37px;top:276px;font-size:11.5px;color:#1e1e1e;transform:scaleX(0.9300);transform-origin:0 0;">Sex</div>
<div class="t" style="left:849.16px;top:294px;font-size:11.5px;color:#1e1e1e;transform:scaleX(0.9300);transform-origin:0 0;">Religion</div>
<div class="t" style="left:822.42px;top:313px;font-size:11.5px;color:#1e1e1e;transform:scaleX(0.9300);transform-origin:0 0;">Marital Status</div>
<div class="t" style="left:900.00px;top:276px;font-size:11.5px;color:#101010;font-weight:bold;-webkit-text-stroke:0.05px currentColor;transform:scaleX(0.8542);transform-origin:0 0;">F</div>
<div class="b" style="left:897px;top:292px;width:9px;height:9px;background:#b1aead"></div>
<div class="b" style="left:906px;top:292px;width:9px;height:9px;background:#c1bfbf"></div>
<div class="b" style="left:897px;top:298px;width:6px;height:6px;background:#babbbe"></div>
<div class="b" style="left:903px;top:298px;width:6px;height:6px;background:#bbbcbf"></div>
<div class="t" style="left:900.00px;top:313px;font-size:11.5px;color:#101010;font-weight:bold;-webkit-text-stroke:0.05px currentColor;transform:scaleX(1.0439);transform-origin:0 0;">M</div>
<div class="t" style="left:1010.47px;top:276px;font-size:11.5px;color:#1e1e1e;transform:scaleX(0.9300);transform-origin:0 0;">Nationality</div>
<div class="t" style="left:983.14px;top:294px;font-size:11.5px;color:#1e1e1e;transform:scaleX(0.9300);transform-origin:0 0;">Security Expires</div>
<div class="t" style="left:1019.98px;top:313px;font-size:11.5px;color:#1e1e1e;transform:scaleX(0.9300);transform-origin:0 0;">Ethnicity</div>
<div class="b" style="left:1072px;top:273px;width:9px;height:9px;background:#c1c3c7"></div>
<div class="b" style="left:1081px;top:273px;width:7px;height:9px;background:#b9b8b9"></div>
<div class="b" style="left:1072px;top:282px;width:9px;height:9px;background:#ced2d8"></div>
<div class="b" style="left:1081px;top:282px;width:7px;height:9px;background:#bec2c8"></div>
<div class="t" style="left:1072.00px;top:294px;font-size:11.5px;color:#101010;font-weight:bold;-webkit-text-stroke:0.05px currentColor;transform:scaleX(0.9263);transform-origin:0 0;">02 Dec 2017</div>
<div class="b" style="left:1070px;top:311px;width:9px;height:9px;background:#acaeb2"></div>
<div class="b" style="left:1079px;top:311px;width:9px;height:9px;background:#aaadb2"></div>
<div class="b" style="left:1070px;top:320px;width:9px;height:9px;background:#d0d4da"></div>
<div class="b" style="left:1079px;top:320px;width:9px;height:9px;background:#cacbce"></div>
<div class="b" style="left:193px;top:348px;width:29px;height:16px;border:1px solid #111;border-bottom:none;border-radius:3px 3px 0 0;border-left-width:1.5px;border-right-width:1.5px"></div>
<div class="t" style="left:196.09px;top:351px;font-size:12px;color:#ff2020;transform:scaleX(0.9500);transform-origin:0 0;">Bio1</div>
<div class="b" style="left:227px;top:348px;width:29px;height:16px;border:1px solid #111;border-bottom:none;border-radius:3px 3px 0 0;border-left-width:1.5px;border-right-width:1.5px"></div>
<div class="t" style="left:230.09px;top:351px;font-size:12px;color:#3030f0;transform:scaleX(0.9500);transform-origin:0 0;">Bio2</div>
<div class="b" style="left:228.5px;top:366px;width:26.0px;height:2px;background:#0000ff"></div>
<div class="b" style="left:261px;top:348px;width:72px;height:16px;border:1px solid #111;border-bottom:none;border-radius:3px 3px 0 0;border-left-width:1.5px;border-right-width:1.5px"></div>
<div class="t" style="left:265.00px;top:351px;font-size:12px;color:#3030f0;transform:scaleX(0.9500);transform-origin:0 0;">Identification</div>
<div class="b" style="left:262.5px;top:366px;width:69.0px;height:2px;background:#0000ff"></div>
<div class="b" style="left:338px;top:348px;width:81px;height:16px;border:1px solid #111;border-bottom:none;border-radius:3px 3px 0 0;border-left-width:1.5px;border-right-width:1.5px"></div>
<div class="t" style="left:340.80px;top:351px;font-size:12px;color:#3030f0;transform:scaleX(0.9500);transform-origin:0 0;">Medical Health</div>
<div class="b" style="left:339.5px;top:366px;width:78.0px;height:2px;background:#0000ff"></div>
<div class="b" style="left:424px;top:348px;width:65px;height:16px;border:1px solid #111;border-bottom:none;border-radius:3px 3px 0 0;border-left-width:1.5px;border-right-width:1.5px"></div>
<div class="t" style="left:425.77px;top:351px;font-size:12px;color:#3030f0;transform:scaleX(0.9500);transform-origin:0 0;">Citizenships</div>
<div class="b" style="left:425.5px;top:366px;width:62.0px;height:2px;background:#0000ff"></div>
<div class="b" style="left:494px;top:348px;width:46px;height:16px;border:1px solid #111;border-bottom:none;border-radius:3px 3px 0 0;border-left-width:1.5px;border-right-width:1.5px"></div>
<div class="t" style="left:496.09px;top:351px;font-size:12px;color:#3030f0;transform:scaleX(0.9500);transform-origin:0 0;">Address</div>
<div class="b" style="left:495.5px;top:366px;width:43.0px;height:2px;background:#0000ff"></div>
<div class="b" style="left:545px;top:348px;width:56px;height:16px;border:1px solid #111;border-bottom:none;border-radius:3px 3px 0 0;border-left-width:1.5px;border-right-width:1.5px"></div>
<div class="t" style="left:547.65px;top:351px;font-size:12px;color:#3030f0;transform:scaleX(0.9500);transform-origin:0 0;">Education</div>
<div class="b" style="left:546.5px;top:366px;width:53.0px;height:2px;background:#0000ff"></div>
<div class="b" style="left:606px;top:348px;width:59px;height:16px;border:1px solid #111;border-bottom:none;border-radius:3px 3px 0 0;border-left-width:1.5px;border-right-width:1.5px"></div>
<div class="t" style="left:607.29px;top:351px;font-size:12px;color:#3030f0;transform:scaleX(0.9500);transform-origin:0 0;">Languages</div>
<div class="b" style="left:607.5px;top:366px;width:56.0px;height:2px;background:#0000ff"></div>
<div class="b" style="left:193px;top:377px;width:69px;height:16px;border:1px solid #111;border-bottom:none;border-radius:3px 3px 0 0;border-left-width:1.5px;border-right-width:1.5px"></div>
<div class="t" style="left:195.82px;top:380px;font-size:12px;color:#3030f0;transform:scaleX(0.9500);transform-origin:0 0;">Employment</div>
<div class="b" style="left:194.5px;top:395px;width:66.0px;height:2px;background:#0000ff"></div>
<div class="b" style="left:267px;top:377px;width:82px;height:16px;border:1px solid #111;border-bottom:none;border-radius:3px 3px 0 0;border-left-width:1.5px;border-right-width:1.5px"></div>
<div class="t" style="left:269.36px;top:380px;font-size:12px;color:#3030f0;transform:scaleX(0.9500);transform-origin:0 0;">Military Service</div>
<div class="b" style="left:268.5px;top:395px;width:79.0px;height:2px;background:#0000ff"></div>
<div class="b" style="left:355px;top:377px;width:78px;height:16px;border:1px solid #111;border-bottom:none;border-radius:3px 3px 0 0;border-left-width:1.5px;border-right-width:1.5px"></div>
<div class="t" style="left:357.35px;top:380px;font-size:12px;color:#3030f0;transform:scaleX(0.9500);transform-origin:0 0;">Law Violations</div>
<div class="b" style="left:356.5px;top:395px;width:75.0px;height:2px;background:#0000ff"></div>
<div class="b" style="left:438px;top:377px;width:74px;height:16px;border:1px solid #111;border-bottom:none;border-radius:3px 3px 0 0;border-left-width:1.5px;border-right-width:1.5px"></div>
<div class="t" style="left:439.83px;top:380px;font-size:12px;color:#3030f0;transform:scaleX(0.9500);transform-origin:0 0;">Organizations</div>
<div class="b" style="left:439.5px;top:395px;width:71.0px;height:2px;background:#0000ff"></div>
<div class="b" style="left:517px;top:377px;width:49px;height:16px;border:1px solid #111;border-bottom:none;border-radius:3px 3px 0 0;border-left-width:1.5px;border-right-width:1.5px"></div>
<div class="t" style="left:518.48px;top:380px;font-size:12px;color:#3030f0;transform:scaleX(0.9500);transform-origin:0 0;">US Visits</div>
<div class="b" style="left:518.5px;top:395px;width:46.0px;height:2px;background:#0000ff"></div>
<div class="b" style="left:571px;top:377px;width:37px;height:16px;border:1px solid #111;border-bottom:none;border-radius:3px 3px 0 0;border-left-width:1.5px;border-right-width:1.5px"></div>
<div class="t" style="left:575.25px;top:380px;font-size:12px;color:#3030f0;transform:scaleX(0.9500);transform-origin:0 0;">Minor</div>
<div class="b" style="left:613px;top:377px;width:67px;height:16px;border:1px solid #111;border-bottom:none;border-radius:3px 3px 0 0;border-left-width:1.5px;border-right-width:1.5px"></div>
<div class="t" style="left:615.77px;top:380px;font-size:12px;color:#3030f0;transform:scaleX(0.9500);transform-origin:0 0;">Contact Info</div>
<div class="b" style="left:614.5px;top:395px;width:64.0px;height:2px;background:#0000ff"></div>
<div class="b" style="left:189px;top:401px;width:1000px;height:393px;border:1px solid #c4c4c4"></div>
<div class="t" style="left:246.79px;top:422px;font-size:11.5px;color:#1e1e1e;transform:scaleX(0.9300);transform-origin:0 0;">Last Name</div>
<svg class="b" style="left:240.8px;top:423.0px" width="6" height="6" viewBox="0 0 6 6"><path d="M3 0.3 L3.7 2.1 L5.6 2.2 L4.1 3.4 L4.7 5.3 L3 4.2 L1.3 5.3 L1.9 3.4 L0.4 2.2 L2.3 2.1 Z" fill="#c01818"/></svg>
<div class="b" style="left:302px;top:416px;width:152px;height:22px;background:#fff;border:1px solid #666666"></div>
<div class="b" style="left:303px;top:418px;width:9px;height:9px;background:#dbd9d9"></div>
<div class="b" style="left:312px;top:418px;width:9px;height:9px;background:#cacacc"></div>
<div class="b" style="left:321px;top:418px;width:9px;height:9px;background:#d2d1d2"></div>
<div class="b" style="left:330px;top:418px;width:9px;height:9px;background:#d2d5da"></div>
<div class="b" style="left:339px;top:418px;width:9px;height:9px;background:#ccc9c8"></div>
<div class="b" style="left:348px;top:418px;width:9px;height:9px;background:#d7d4d3"></div>
<div class="b" style="left:357px;top:418px;width:9px;height:9px;background:#d5d5d7"></div>
<div class="b" style="left:366px;top:418px;width:9px;height:9px;background:#c6c8cc"></div>
<div class="b" style="left:375px;top:418px;width:9px;height:9px;background:#cac9ca"></div>
<div class="b" style="left:303px;top:427px;width:9px;height:8px;background:#e7e7e9"></div>
<div class="b" style="left:312px;top:427px;width:9px;height:8px;background:#dddfe3"></div>
<div class="b" style="left:321px;top:427px;width:9px;height:8px;background:#dce0e6"></div>
<div class="b" style="left:330px;top:427px;width:9px;height:8px;background:#dad6d4"></div>
<div class="b" style="left:339px;top:427px;width:9px;height:8px;background:#d9dbdf"></div>
<div class="b" style="left:348px;top:427px;width:9px;height:8px;background:#eae6e4"></div>
<div class="b" style="left:357px;top:427px;width:9px;height:8px;background:#d4d0ce"></div>
<div class="b" style="left:366px;top:427px;width:9px;height:8px;background:#d6d9de"></div>
<div class="b" style="left:375px;top:427px;width:9px;height:8px;background:#e6e6e8"></div>
<div class="t" style="left:246.21px;top:445px;font-size:11.5px;color:#1e1e1e;transform:scaleX(0.9300);transform-origin:0 0;">First Name</div>
<div class="b" style="left:302px;top:440px;width:152px;height:21px;background:#fff;border:1px solid #666666"></div>
<div class="b" style="left:304px;top:445px;width:9px;height:9px;background:#cbcacb"></div>
<div class="b" style="left:313px;top:445px;width:9px;height:9px;background:#c0bfc0"></div>
<div class="b" style="left:322px;top:445px;width:9px;height:9px;background:#d1d2d5"></div>
<div class="b" style="left:331px;top:445px;width:9px;height:9px;background:#cfcbc9"></div>
<div class="b" style="left:340px;top:445px;width:9px;height:9px;background:#d6d2d0"></div>
<div class="b" style="left:349px;top:445px;width:9px;height:9px;background:#c3c4c7"></div>
<div class="b" style="left:304px;top:454px;width:9px;height:3px;background:#e6e7ea"></div>
<div class="b" style="left:313px;top:454px;width:9px;height:3px;background:#dddbdb"></div>
<div class="b" style="left:322px;top:454px;width:9px;height:3px;background:#eaebee"></div>
<div class="b" style="left:331px;top:454px;width:9px;height:3px;background:#dedad8"></div>
<div class="b" style="left:340px;top:454px;width:9px;height:3px;background:#e4e3e4"></div>
<div class="b" style="left:349px;top:454px;width:9px;height:3px;background:#e7ebf1"></div>
<div class="b" style="left:349px;top:445px;width:9px;height:9px;background:#f2f5fa"></div>
<div class="t" style="left:231.93px;top:468px;font-size:11.5px;color:#1e1e1e;transform:scaleX(0.9300);transform-origin:0 0;">Maiden Name</div>
<div class="b" style="left:302px;top:463px;width:152px;height:21px;background:#fff;border:1px solid #666666"></div>
<div class="t" style="left:239.64px;top:491px;font-size:11.5px;color:#1e1e1e;transform:scaleX(0.9300);transform-origin:0 0;">Relationship</div>
<svg class="b" style="left:233.6px;top:492.0px" width="6" height="6" viewBox="0 0 6 6"><path d="M3 0.3 L3.7 2.1 L5.6 2.2 L4.1 3.4 L4.7 5.3 L3 4.2 L1.3 5.3 L1.9 3.4 L0.4 2.2 L2.3 2.1 Z" fill="#c01818"/></svg>
<div class="b" style="left:302px;top:486px;width:157px;height:20px;background:#ebebeb;border:1px solid #c6c6c6"></div>
<svg class="b" style="left:443.0px;top:492.0px" width="12" height="8" viewBox="0 0 12 8"><path d="M1 1 L6.0 7.0 L11 1" stroke="#7a7a7a" stroke-width="2" fill="none"/></svg>
<div class="t" style="left:306.00px;top:489px;font-size:13.1px;color:#808080;-webkit-text-stroke:0;">Principal Applicant</div>
<div class="b" style="left:206px;top:507px;width:275px;height:26px;border:3px solid #e64646"></div>
<div class="t" style="left:236.09px;top:514px;font-size:11.5px;color:#3434c8;transform:scaleX(0.9300);transform-origin:0 0;">Birth Country</div>
<svg class="b" style="left:230.1px;top:515.0px" width="6" height="6" viewBox="0 0 6 6"><path d="M3 0.3 L3.7 2.1 L5.6 2.2 L4.1 3.4 L4.7 5.3 L3 4.2 L1.3 5.3 L1.9 3.4 L0.4 2.2 L2.3 2.1 Z" fill="#e02020"/></svg>
<div class="b" style="left:302px;top:510px;width:45px;height:19px;background:#fff;border:1px solid #666666"></div>
<div class="b" style="left:330px;top:512px;width:14px;height:16px;background:#c2d6f8"></div>
<svg class="b" style="left:332.0px;top:517.0px" width="10" height="6" viewBox="0 0 10 6"><path d="M1 1 L5.0 5.0 L9 1" stroke="#1a2c80" stroke-width="2.4" fill="none"/></svg>
<div class="b" style="left:303px;top:512px;width:9px;height:9px;background:#c2c2c4"></div>
<div class="b" style="left:312px;top:512px;width:9px;height:9px;background:#d1d1d3"></div>
<div class="b" style="left:321px;top:512px;width:8px;height:9px;background:#c9c8c9"></div>
<div class="b" style="left:303px;top:521px;width:9px;height:5px;background:#e3e2e3"></div>
<div class="b" style="left:312px;top:521px;width:9px;height:5px;background:#dcdfe4"></div>
<div class="b" style="left:321px;top:521px;width:8px;height:5px;background:#d8dbe0"></div>
<div class="b" style="left:348px;top:510px;width:124px;height:19px;background:#fff;border:1px solid #666666"></div>
<div class="b" style="left:352px;top:513px;width:9px;height:9px;background:#c0bdbc"></div>
<div class="b" style="left:361px;top:513px;width:9px;height:9px;background:#bdbcbd"></div>
<div class="b" style="left:370px;top:513px;width:9px;height:9px;background:#bfbcbb"></div>
<div class="b" style="left:379px;top:513px;width:9px;height:9px;background:#c5c9cf"></div>
<div class="b" style="left:388px;top:513px;width:9px;height:9px;background:#c6c5c6"></div>
<div class="b" style="left:397px;top:513px;width:9px;height:9px;background:#c7cacf"></div>
<div class="b" style="left:406px;top:513px;width:9px;height:9px;background:#c8cbd0"></div>
<div class="b" style="left:415px;top:513px;width:9px;height:9px;background:#c1c2c5"></div>
<div class="b" style="left:424px;top:513px;width:9px;height:9px;background:#c3c5c9"></div>
<div class="b" style="left:433px;top:513px;width:9px;height:9px;background:#c4c3c4"></div>
<div class="b" style="left:442px;top:513px;width:9px;height:9px;background:#bab8b8"></div>
<div class="b" style="left:451px;top:513px;width:9px;height:9px;background:#c6c4c4"></div>
<div class="b" style="left:352px;top:522px;width:9px;height:4px;background:#eaedf2"></div>
<div class="b" style="left:361px;top:522px;width:9px;height:4px;background:#ebedf1"></div>
<div class="b" style="left:370px;top:522px;width:9px;height:4px;background:#d9dbdf"></div>
<div class="b" style="left:379px;top:522px;width:9px;height:4px;background:#d4d6da"></div>
<div class="b" style="left:388px;top:522px;width:9px;height:4px;background:#ebe8e7"></div>
<div class="b" style="left:397px;top:522px;width:9px;height:4px;background:#e8eaee"></div>
<div class="b" style="left:406px;top:522px;width:9px;height:4px;background:#ece9e8"></div>
<div class="b" style="left:415px;top:522px;width:9px;height:4px;background:#ecebec"></div>
<div class="b" style="left:424px;top:522px;width:9px;height:4px;background:#dedad8"></div>
<div class="b" style="left:433px;top:522px;width:9px;height:4px;background:#e5e7eb"></div>
<div class="b" style="left:442px;top:522px;width:9px;height:4px;background:#d2d6dc"></div>
<div class="b" style="left:451px;top:522px;width:9px;height:4px;background:#eaedf2"></div>
<div class="b" style="left:352px;top:513px;width:1px;height:10px;background:#d08a30"></div>
<div class="t" style="left:223.61px;top:537px;font-size:11.5px;color:#1e1e1e;transform:scaleX(0.9300);transform-origin:0 0;">Birth State/Prov</div>
<div class="b" style="left:302px;top:534px;width:154px;height:18px;background:#fff;border:1px solid #666666"></div>
<svg class="b" style="left:440.0px;top:539.0px" width="12" height="8" viewBox="0 0 12 8"><path d="M1 1 L6.0 7.0 L11 1" stroke="#1a1a1a" stroke-width="2" fill="none"/></svg>
<div class="b" style="left:306px;top:537px;width:9px;height:9px;background:#bec0c4"></div>
<div class="b" style="left:315px;top:537px;width:9px;height:9px;background:#bcbdc0"></div>
<div class="b" style="left:324px;top:537px;width:9px;height:9px;background:#b2b6bc"></div>
<div class="b" style="left:333px;top:537px;width:9px;height:9px;background:#b7b8bb"></div>
<div class="b" style="left:342px;top:537px;width:9px;height:9px;background:#bdb9b7"></div>
<div class="b" style="left:351px;top:537px;width:9px;height:9px;background:#b8b7b8"></div>
<div class="b" style="left:360px;top:537px;width:9px;height:9px;background:#bcb8b6"></div>
<div class="b" style="left:369px;top:537px;width:9px;height:9px;background:#bbbdc1"></div>
<div class="b" style="left:378px;top:537px;width:9px;height:9px;background:#b2b1b2"></div>
<div class="b" style="left:387px;top:537px;width:9px;height:9px;background:#c2bebc"></div>
<div class="b" style="left:306px;top:546px;width:9px;height:2px;background:#e1dddb"></div>
<div class="b" style="left:315px;top:546px;width:9px;height:2px;background:#d8d4d2"></div>
<div class="b" style="left:324px;top:546px;width:9px;height:2px;background:#d8d4d2"></div>
<div class="b" style="left:333px;top:546px;width:9px;height:2px;background:#dce0e6"></div>
<div class="b" style="left:342px;top:546px;width:9px;height:2px;background:#dcdee2"></div>
<div class="b" style="left:351px;top:546px;width:9px;height:2px;background:#dfe3e9"></div>
<div class="b" style="left:360px;top:546px;width:9px;height:2px;background:#e6e8ec"></div>
<div class="b" style="left:369px;top:546px;width:9px;height:2px;background:#d3d5d9"></div>
<div class="b" style="left:378px;top:546px;width:9px;height:2px;background:#dcdfe4"></div>
<div class="b" style="left:387px;top:546px;width:9px;height:2px;background:#dde1e7"></div>
<div class="b" style="left:240px;top:553px;width:268px;height:51px;border:3px solid #e64646"></div>
<div class="t" style="left:255.12px;top:561px;font-size:11.5px;color:#1e1e1e;transform:scaleX(0.9300);transform-origin:0 0;">Birth City</div>
<div class="b" style="left:302px;top:556px;width:152px;height:20px;background:#fff;border:1px solid #666666"></div>
<div class="b" style="left:305px;top:560px;width:9px;height:9px;background:#ccc8c6"></div>
<div class="b" style="left:314px;top:560px;width:9px;height:9px;background:#d2cecc"></div>
<div class="b" style="left:323px;top:560px;width:9px;height:9px;background:#cacdd2"></div>
<div class="b" style="left:332px;top:560px;width:9px;height:9px;background:#cbcfd5"></div>
<div class="b" style="left:305px;top:569px;width:9px;height:5px;background:#e4e5e8"></div>
<div class="b" style="left:314px;top:569px;width:9px;height:5px;background:#e2e6ec"></div>
<div class="b" style="left:323px;top:569px;width:9px;height:5px;background:#f3f6fb"></div>
<div class="b" style="left:332px;top:569px;width:9px;height:5px;background:#f1eeed"></div>
<div class="t" style="left:250.95px;top:584px;font-size:11.5px;color:#1e1e1e;transform:scaleX(0.9300);transform-origin:0 0;">Birth Date</div>
<svg class="b" style="left:244.9px;top:585.0px" width="6" height="6" viewBox="0 0 6 6"><path d="M3 0.3 L3.7 2.1 L5.6 2.2 L4.1 3.4 L4.7 5.3 L3 4.2 L1.3 5.3 L1.9 3.4 L0.4 2.2 L2.3 2.1 Z" fill="#c01818"/></svg>
<div class="b" style="left:302px;top:578px;width:99px;height:22px;background:#fff;border:1px solid #666666"></div>
<div class="b" style="left:304px;top:582px;width:9px;height:9px;background:#cfd3d9"></div>
<div class="b" style="left:313px;top:582px;width:9px;height:9px;background:#d7dadf"></div>
<div class="b" style="left:322px;top:582px;width:9px;height:9px;background:#d1d0d1"></div>
<div class="b" style="left:331px;top:582px;width:9px;height:9px;background:#d9d5d3"></div>
<div class="b" style="left:340px;top:582px;width:9px;height:9px;background:#d9d5d3"></div>
<div class="b" style="left:349px;top:582px;width:9px;height:9px;background:#c8c8ca"></div>
<div class="b" style="left:358px;top:582px;width:9px;height:9px;background:#d4d0ce"></div>
<div class="b" style="left:367px;top:582px;width:9px;height:9px;background:#d6d3d2"></div>
<div class="b" style="left:376px;top:582px;width:9px;height:9px;background:#d1d2d5"></div>
<div class="b" style="left:304px;top:591px;width:9px;height:5px;background:#f2eeec"></div>
<div class="b" style="left:313px;top:591px;width:9px;height:5px;background:#e4e0de"></div>
<div class="b" style="left:322px;top:591px;width:9px;height:5px;background:#e1dedd"></div>
<div class="b" style="left:331px;top:591px;width:9px;height:5px;background:#dedcdc"></div>
<div class="b" style="left:340px;top:591px;width:9px;height:5px;background:#dddbdb"></div>
<div class="b" style="left:349px;top:591px;width:9px;height:5px;background:#e7e6e7"></div>
<div class="b" style="left:358px;top:591px;width:9px;height:5px;background:#d9dadd"></div>
<div class="b" style="left:367px;top:591px;width:9px;height:5px;background:#e2e5ea"></div>
<div class="b" style="left:376px;top:591px;width:9px;height:5px;background:#dedee0"></div>
<svg class="b" style="left:404px;top:578px" width="21" height="22" viewBox="0 0 21 22">
<rect x="0" y="0" width="20" height="21" fill="#ecece4"/>
<rect x="0" y="0" width="20" height="5" fill="#3c64ee"/>
<path d="M0 9 H20 M0 13 H20 M0 17 H20 M4 5 V21 M8 5 V21 M12 5 V21 M16 5 V21" stroke="#b4b4ac" stroke-width="0.8"/>
<path d="M20.5 1 V21.5 H2" stroke="#303030" stroke-width="1" fill="none"/>
<path d="M4 9 L15 9 L9.5 15 Z" fill="#000"/>
</svg>
<div class="t" style="left:433.40px;top:584px;font-size:11.5px;color:#1e1e1e;transform:scaleX(0.9086);transform-origin:0 0;">Est.</div>
<div class="b" style="left:451px;top:579px;width:50px;height:20px;background:#fff;border:1px solid #666666"></div>
<svg class="b" style="left:485.0px;top:585.0px" width="12" height="8" viewBox="0 0 12 8"><path d="M1 1 L6.0 7.0 L11 1" stroke="#1a1a1a" stroke-width="2" fill="none"/></svg>
<div class="t" style="left:455.00px;top:583px;font-size:13.1px;color:#111;-webkit-text-stroke:0;">Yes</div>
<div class="t" style="left:243.22px;top:608px;font-size:11.5px;color:#1e1e1e;transform:scaleX(0.9300);transform-origin:0 0;">Minor Code</div>
<div class="b" style="left:302px;top:604px;width:43px;height:19px;background:#ebebeb;border:1px solid #c6c6c6"></div>
<svg class="b" style="left:329.0px;top:609.5px" width="12" height="8" viewBox="0 0 12 8"><path d="M1 1 L6.0 7.0 L11 1" stroke="#7a7a7a" stroke-width="2" fill="none"/></svg>
<div class="t" style="left:246.80px;top:628px;font-size:11.5px;color:#1e1e1e;transform:scaleX(0.9300);transform-origin:0 0;">Comments</div>
<div class="b" style="left:302px;top:626px;width:869px;height:56px;background:#fff;border:1px solid #666666"></div>
<div class="b" style="left:304px;top:633px;width:2px;height:8px;background:#e0a050"></div>
<div class="b" style="left:306px;top:632px;width:9px;height:9px;background:#b5b7bb"></div>
<div class="b" style="left:315px;top:632px;width:9px;height:9px;background:#cbcacb"></div>
<div class="b" style="left:324px;top:632px;width:9px;height:9px;background:#b8b8ba"></div>
<div class="b" style="left:333px;top:632px;width:9px;height:9px;background:#bbb8b7"></div>
<div class="b" style="left:342px;top:632px;width:9px;height:9px;background:#b8bbc0"></div>
<div class="b" style="left:351px;top:632px;width:9px;height:9px;background:#c3c0bf"></div>
<div class="b" style="left:360px;top:632px;width:9px;height:9px;background:#b8b9bc"></div>
<div class="b" style="left:369px;top:632px;width:9px;height:9px;background:#bbb9b9"></div>
<div class="b" style="left:378px;top:632px;width:9px;height:9px;background:#c6c4c4"></div>
<div class="b" style="left:387px;top:632px;width:9px;height:9px;background:#c0bebe"></div>
<div class="b" style="left:396px;top:632px;width:9px;height:9px;background:#bbbabb"></div>
<div class="b" style="left:414px;top:632px;width:9px;height:9px;background:#bbbec3"></div>
<div class="b" style="left:423px;top:632px;width:9px;height:9px;background:#cccbcc"></div>
<div class="b" style="left:432px;top:632px;width:9px;height:9px;background:#b5b4b5"></div>
<div class="b" style="left:441px;top:632px;width:9px;height:9px;background:#c8c5c4"></div>
<div class="b" style="left:450px;top:632px;width:9px;height:9px;background:#bec2c8"></div>
<div class="b" style="left:459px;top:632px;width:9px;height:9px;background:#c1c0c1"></div>
<div class="b" style="left:468px;top:632px;width:9px;height:9px;background:#c4c4c6"></div>
<div class="b" style="left:477px;top:632px;width:9px;height:9px;background:#c1c4c9"></div>
<div class="b" style="left:486px;top:632px;width:9px;height:9px;background:#b6b7ba"></div>
<div class="b" style="left:495px;top:632px;width:9px;height:9px;background:#b4b7bc"></div>
<div class="b" style="left:504px;top:632px;width:9px;height:9px;background:#bcbcbe"></div>
<div class="b" style="left:522px;top:632px;width:9px;height:9px;background:#b3b5b9"></div>
<div class="b" style="left:531px;top:632px;width:9px;height:9px;background:#babcc0"></div>
<div class="b" style="left:540px;top:632px;width:9px;height:9px;background:#c1c1c3"></div>
<div class="b" style="left:549px;top:632px;width:9px;height:9px;background:#bec0c4"></div>
<div class="b" style="left:558px;top:632px;width:9px;height:9px;background:#c9c5c3"></div>
<div class="b" style="left:567px;top:632px;width:9px;height:9px;background:#c9c6c5"></div>
<div class="b" style="left:576px;top:632px;width:9px;height:9px;background:#cbcacb"></div>
<div class="b" style="left:594px;top:632px;width:9px;height:9px;background:#b6b6b8"></div>
<div class="b" style="left:603px;top:632px;width:9px;height:9px;background:#b3b5b9"></div>
<div class="b" style="left:612px;top:632px;width:9px;height:9px;background:#bec1c6"></div>
<div class="b" style="left:621px;top:632px;width:9px;height:9px;background:#b8bcc2"></div>
<div class="b" style="left:333px;top:641px;width:9px;height:9px;background:#eff2f7"></div>
<div class="b" style="left:369px;top:641px;width:9px;height:9px;background:#e3e6eb"></div>
<div class="b" style="left:396px;top:641px;width:9px;height:9px;background:#f0f1f4"></div>
<div class="b" style="left:477px;top:641px;width:9px;height:9px;background:#e0e0e2"></div>
<div class="b" style="left:531px;top:641px;width:9px;height:9px;background:#e4e1e0"></div>
<div class="b" style="left:603px;top:641px;width:9px;height:9px;background:#dfdedf"></div>
<div class="b" style="left:1150px;top:628px;width:19px;height:52px;background:#f4f4f4"></div>
<svg class="b" style="left:1155px;top:638px" width="11" height="8" viewBox="0 0 11 8"><path d="M1 6.5 L5.5 1.5 L10 6.5" stroke="#a8a8a8" stroke-width="1.9" fill="none"/></svg>
<svg class="b" style="left:1155px;top:660px" width="11" height="8" viewBox="0 0 11 8"><path d="M1 1.5 L5.5 6.5 L10 1.5" stroke="#a8a8a8" stroke-width="1.9" fill="none"/></svg>
<div class="t" style="left:302.00px;top:684px;font-size:11.5px;color:#d4861e;transform:scaleX(0.9401);transform-origin:0 0;">3939 characters remaining.</div>
<div class="t" style="left:533.47px;top:422px;font-size:11.5px;color:#1e1e1e;transform:scaleX(0.9300);transform-origin:0 0;">2nd Last Name</div>
<div class="b" style="left:609px;top:416px;width:153px;height:22px;background:#fff;border:1px solid #666666"></div>
<div class="t" style="left:541.00px;top:445px;font-size:11.5px;color:#1e1e1e;transform:scaleX(0.9300);transform-origin:0 0;">Middle Name</div>
<div class="b" style="left:609px;top:440px;width:153px;height:21px;background:#fff;border:1px solid #666666"></div>
<div class="t" style="left:587.57px;top:468px;font-size:11.5px;color:#1e1e1e;transform:scaleX(0.9300);transform-origin:0 0;">Sex</div>
<svg class="b" style="left:581.6px;top:469.0px" width="6" height="6" viewBox="0 0 6 6"><path d="M3 0.3 L3.7 2.1 L5.6 2.2 L4.1 3.4 L4.7 5.3 L3 4.2 L1.3 5.3 L1.9 3.4 L0.4 2.2 L2.3 2.1 Z" fill="#c01818"/></svg>
<div class="b" style="left:609px;top:464px;width:80px;height:19px;background:#fff;border:1px solid #666666"></div>
<svg class="b" style="left:673.0px;top:469.5px" width="12" height="8" viewBox="0 0 12 8"><path d="M1 1 L6.0 7.0 L11 1" stroke="#1a1a1a" stroke-width="2" fill="none"/></svg>
<div class="t" style="left:613.00px;top:467px;font-size:13.1px;color:#111;-webkit-text-stroke:0;">Female</div>
<div class="t" style="left:526.94px;top:491px;font-size:11.5px;color:#1e1e1e;transform:scaleX(0.9300);transform-origin:0 0;">Current Location</div>
<div class="b" style="left:609px;top:486px;width:565px;height:20px;background:#fff;border:1px solid #666666"></div>
<svg class="b" style="left:1158.0px;top:492.0px" width="12" height="8" viewBox="0 0 12 8"><path d="M1 1 L6.0 7.0 L11 1" stroke="#1a1a1a" stroke-width="2" fill="none"/></svg>
<div class="b" style="left:612px;top:490px;width:9px;height:9px;background:#d3d1d1"></div>
<div class="b" style="left:621px;top:490px;width:9px;height:9px;background:#c6c8cc"></div>
<div class="b" style="left:630px;top:490px;width:9px;height:9px;background:#c5c1bf"></div>
<div class="b" style="left:639px;top:490px;width:9px;height:9px;background:#d5d6d9"></div>
<div class="b" style="left:648px;top:490px;width:9px;height:9px;background:#c1c3c7"></div>
<div class="b" style="left:657px;top:490px;width:9px;height:9px;background:#c4c8ce"></div>
<div class="b" style="left:666px;top:490px;width:9px;height:9px;background:#c4c5c8"></div>
<div class="b" style="left:675px;top:490px;width:9px;height:9px;background:#c9c9cb"></div>
<div class="b" style="left:684px;top:490px;width:9px;height:9px;background:#cfd0d3"></div>
<div class="b" style="left:693px;top:490px;width:9px;height:9px;background:#ccc9c8"></div>
<div class="b" style="left:702px;top:490px;width:9px;height:9px;background:#ced0d4"></div>
<div class="b" style="left:711px;top:490px;width:9px;height:9px;background:#c9c8c9"></div>
<div class="b" style="left:720px;top:490px;width:9px;height:9px;background:#c0c0c2"></div>
<div class="b" style="left:729px;top:490px;width:9px;height:9px;background:#bdc1c7"></div>
<div class="b" style="left:738px;top:490px;width:9px;height:9px;background:#c4c0be"></div>
<div class="b" style="left:747px;top:490px;width:9px;height:9px;background:#d0d1d4"></div>
<div class="b" style="left:612px;top:499px;width:9px;height:5px;background:#f5f2f1"></div>
<div class="b" style="left:621px;top:499px;width:9px;height:5px;background:#ece9e8"></div>
<div class="b" style="left:630px;top:499px;width:9px;height:5px;background:#e7e5e5"></div>
<div class="b" style="left:639px;top:499px;width:9px;height:5px;background:#faf7f6"></div>
<div class="b" style="left:648px;top:499px;width:9px;height:5px;background:#f5f3f3"></div>
<div class="b" style="left:657px;top:499px;width:9px;height:5px;background:#f2f2f4"></div>
<div class="b" style="left:666px;top:499px;width:9px;height:5px;background:#f7f8fb"></div>
<div class="b" style="left:675px;top:499px;width:9px;height:5px;background:#eae9ea"></div>
<div class="b" style="left:684px;top:499px;width:9px;height:5px;background:#e6e8ec"></div>
<div class="b" style="left:693px;top:499px;width:9px;height:5px;background:#efeeef"></div>
<div class="b" style="left:702px;top:499px;width:9px;height:5px;background:#e1e3e7"></div>
<div class="b" style="left:711px;top:499px;width:9px;height:5px;background:#dfe2e7"></div>
<div class="b" style="left:720px;top:499px;width:9px;height:5px;background:#f6f6f8"></div>
<div class="b" style="left:729px;top:499px;width:9px;height:5px;background:#edeff3"></div>
<div class="b" style="left:738px;top:499px;width:9px;height:5px;background:#e0e3e8"></div>
<div class="b" style="left:747px;top:499px;width:9px;height:5px;background:#f9f7f7"></div>
<div class="b" style="left:765px;top:490px;width:9px;height:9px;background:#d0d0d2"></div>
<div class="b" style="left:774px;top:490px;width:9px;height:9px;background:#d2d3d6"></div>
<div class="b" style="left:783px;top:490px;width:9px;height:9px;background:#d6d6d8"></div>
<div class="b" style="left:792px;top:490px;width:9px;height:9px;background:#c4c1c0"></div>
<div class="b" style="left:801px;top:490px;width:9px;height:9px;background:#c3c5c9"></div>
<div class="b" style="left:810px;top:490px;width:9px;height:9px;background:#cbc8c7"></div>
<div class="b" style="left:819px;top:490px;width:9px;height:9px;background:#c0c0c2"></div>
<div class="b" style="left:828px;top:490px;width:9px;height:9px;background:#cccbcc"></div>
<div class="b" style="left:837px;top:490px;width:9px;height:9px;background:#d2d1d2"></div>
<div class="b" style="left:846px;top:490px;width:9px;height:9px;background:#c3c7cd"></div>
<div class="b" style="left:855px;top:490px;width:9px;height:9px;background:#c8c9cc"></div>
<div class="b" style="left:864px;top:490px;width:9px;height:9px;background:#c9cbcf"></div>
<div class="b" style="left:873px;top:490px;width:9px;height:9px;background:#c1c0c1"></div>
<div class="b" style="left:882px;top:490px;width:9px;height:9px;background:#c9ccd1"></div>
<div class="b" style="left:891px;top:490px;width:9px;height:9px;background:#cfcfd1"></div>
<div class="b" style="left:900px;top:490px;width:9px;height:9px;background:#cfd0d3"></div>
<div class="b" style="left:909px;top:490px;width:9px;height:9px;background:#cbc7c5"></div>
<div class="b" style="left:918px;top:490px;width:9px;height:9px;background:#d4d8de"></div>
<div class="b" style="left:765px;top:499px;width:9px;height:5px;background:#e4e4e6"></div>
<div class="b" style="left:774px;top:499px;width:9px;height:5px;background:#e2e4e8"></div>
<div class="b" style="left:783px;top:499px;width:9px;height:5px;background:#eaeef4"></div>
<div class="b" style="left:792px;top:499px;width:9px;height:5px;background:#eaeef4"></div>
<div class="b" style="left:801px;top:499px;width:9px;height:5px;background:#ebebed"></div>
<div class="b" style="left:810px;top:499px;width:9px;height:5px;background:#f5f6f9"></div>
<div class="b" style="left:819px;top:499px;width:9px;height:5px;background:#e8e4e2"></div>
<div class="b" style="left:828px;top:499px;width:9px;height:5px;background:#f8fafe"></div>
<div class="b" style="left:837px;top:499px;width:9px;height:5px;background:#f9f7f7"></div>
<div class="b" style="left:846px;top:499px;width:9px;height:5px;background:#fbfafb"></div>
<div class="b" style="left:855px;top:499px;width:9px;height:5px;background:#fcf9f8"></div>
<div class="b" style="left:864px;top:499px;width:9px;height:5px;background:#e6e6e8"></div>
<div class="b" style="left:873px;top:499px;width:9px;height:5px;background:#f7f9fd"></div>
<div class="b" style="left:882px;top:499px;width:9px;height:5px;background:#e7e3e1"></div>
<div class="b" style="left:891px;top:499px;width:9px;height:5px;background:#f8f6f6"></div>
<div class="b" style="left:900px;top:499px;width:9px;height:5px;background:#fdf9f7"></div>
<div class="b" style="left:909px;top:499px;width:9px;height:5px;background:#eae6e4"></div>
<div class="b" style="left:918px;top:499px;width:9px;height:5px;background:#fefaf8"></div>
<div class="b" style="left:550px;top:506px;width:188px;height:27px;border:3px solid #e64646"></div>
<div class="t" style="left:559.64px;top:514px;font-size:11.5px;color:#1e1e1e;transform:scaleX(0.9300);transform-origin:0 0;">Fled Date</div>
<div class="b" style="left:609px;top:509px;width:100px;height:20px;background:#fff;border:1px solid #666666"></div>
<div class="t" style="left:612.00px;top:512px;font-size:13.333px;color:#111;-webkit-text-stroke:0;">01 Jun 2004</div>
<svg class="b" style="left:712px;top:509px" width="21" height="22" viewBox="0 0 21 22">
<rect x="0" y="0" width="20" height="21" fill="#ecece4"/>
<rect x="0" y="0" width="20" height="5" fill="#3c64ee"/>
<path d="M0 9 H20 M0 13 H20 M0 17 H20 M4 5 V21 M8 5 V21 M12 5 V21 M16 5 V21" stroke="#b4b4ac" stroke-width="0.8"/>
<path d="M20.5 1 V21.5 H2" stroke="#303030" stroke-width="1" fill="none"/>
<path d="M4 9 L15 9 L9.5 15 Z" fill="#000"/>
</svg>
<div class="t" style="left:529.92px;top:537px;font-size:11.5px;color:#3434c8;transform:scaleX(0.9300);transform-origin:0 0;">Current Country</div>
<svg class="b" style="left:523.9px;top:538.0px" width="6" height="6" viewBox="0 0 6 6"><path d="M3 0.3 L3.7 2.1 L5.6 2.2 L4.1 3.4 L4.7 5.3 L3 4.2 L1.3 5.3 L1.9 3.4 L0.4 2.2 L2.3 2.1 Z" fill="#e02020"/></svg>
<div class="b" style="left:609px;top:533px;width:47px;height:20px;background:#fff;border:1px solid #666666"></div>
<div class="b" style="left:639px;top:535px;width:14px;height:17px;background:#c2d6f8"></div>
<svg class="b" style="left:641.0px;top:540.5px" width="10" height="6" viewBox="0 0 10 6"><path d="M1 1 L5.0 5.0 L9 1" stroke="#1a2c80" stroke-width="2.4" fill="none"/></svg>
<div class="b" style="left:611px;top:537px;width:9px;height:9px;background:#bec2c8"></div>
<div class="b" style="left:620px;top:537px;width:9px;height:9px;background:#c4c5c8"></div>
<div class="b" style="left:611px;top:546px;width:9px;height:2px;background:#d2d6dc"></div>
<div class="b" style="left:620px;top:546px;width:9px;height:2px;background:#d3d5d9"></div>
<div class="b" style="left:656px;top:533px;width:124px;height:20px;background:#fff;border:1px solid #666666"></div>
<div class="b" style="left:659px;top:536px;width:9px;height:9px;background:#d4d3d4"></div>
<div class="b" style="left:668px;top:536px;width:9px;height:9px;background:#c4c2c2"></div>
<div class="b" style="left:677px;top:536px;width:9px;height:9px;background:#d1cdcb"></div>
<div class="b" style="left:686px;top:536px;width:9px;height:9px;background:#bcc0c6"></div>
<div class="b" style="left:695px;top:536px;width:9px;height:9px;background:#d7d3d1"></div>
<div class="b" style="left:659px;top:545px;width:9px;height:3px;background:#e4e5e8"></div>
<div class="b" style="left:668px;top:545px;width:9px;height:3px;background:#dfdfe1"></div>
<div class="b" style="left:677px;top:545px;width:9px;height:3px;background:#d3d0cf"></div>
<div class="b" style="left:686px;top:545px;width:9px;height:3px;background:#d6d2d0"></div>
<div class="b" style="left:695px;top:545px;width:9px;height:3px;background:#dee1e6"></div>
<div class="b" style="left:704px;top:536px;width:9px;height:9px;background:#f4f8fd"></div>
<div class="b" style="left:543px;top:549px;width:244px;height:80px;border:3px solid #e64646"></div>
<div class="t" style="left:556.07px;top:561px;font-size:11.5px;color:#3434c8;transform:scaleX(0.9300);transform-origin:0 0;">Nationality</div>
<svg class="b" style="left:550.1px;top:562.0px" width="6" height="6" viewBox="0 0 6 6"><path d="M3 0.3 L3.7 2.1 L5.6 2.2 L4.1 3.4 L4.7 5.3 L3 4.2 L1.3 5.3 L1.9 3.4 L0.4 2.2 L2.3 2.1 Z" fill="#e02020"/></svg>
<div class="b" style="left:609px;top:555px;width:47px;height:21px;background:#fff;border:1px solid #666666"></div>
<div class="b" style="left:639px;top:557px;width:14px;height:18px;background:#c2d6f8"></div>
<svg class="b" style="left:641.0px;top:563.0px" width="10" height="6" viewBox="0 0 10 6"><path d="M1 1 L5.0 5.0 L9 1" stroke="#1a2c80" stroke-width="2.4" fill="none"/></svg>
<div class="b" style="left:611px;top:559px;width:9px;height:9px;background:#dbd7d5"></div>
<div class="b" style="left:620px;top:559px;width:9px;height:9px;background:#c7c4c3"></div>
<div class="b" style="left:629px;top:559px;width:5px;height:9px;background:#c7cacf"></div>
<div class="b" style="left:611px;top:568px;width:9px;height:5px;background:#dfe0e3"></div>
<div class="b" style="left:620px;top:568px;width:9px;height:5px;background:#eeeff2"></div>
<div class="b" style="left:629px;top:568px;width:5px;height:5px;background:#e2dfde"></div>
<div class="b" style="left:656px;top:555px;width:124px;height:21px;background:#fff;border:1px solid #666666"></div>
<div class="b" style="left:660px;top:558px;width:9px;height:9px;background:#d7d5d5"></div>
<div class="b" style="left:669px;top:558px;width:9px;height:9px;background:#cbc8c7"></div>
<div class="b" style="left:678px;top:558px;width:9px;height:9px;background:#dbdbdd"></div>
<div class="b" style="left:687px;top:558px;width:9px;height:9px;background:#dadee4"></div>
<div class="b" style="left:696px;top:558px;width:9px;height:9px;background:#d8d9dc"></div>
<div class="b" style="left:705px;top:558px;width:9px;height:9px;background:#c6c8cc"></div>
<div class="b" style="left:714px;top:558px;width:9px;height:9px;background:#d0d0d2"></div>
<div class="b" style="left:723px;top:558px;width:9px;height:9px;background:#dadadc"></div>
<div class="b" style="left:732px;top:558px;width:9px;height:9px;background:#d7d9dd"></div>
<div class="b" style="left:741px;top:558px;width:9px;height:9px;background:#c9c6c5"></div>
<div class="b" style="left:750px;top:558px;width:9px;height:9px;background:#cac7c6"></div>
<div class="b" style="left:759px;top:558px;width:9px;height:9px;background:#cbced3"></div>
<div class="b" style="left:660px;top:567px;width:9px;height:6px;background:#e3e4e7"></div>
<div class="b" style="left:669px;top:567px;width:9px;height:6px;background:#e6e3e2"></div>
<div class="b" style="left:678px;top:567px;width:9px;height:6px;background:#dbd7d5"></div>
<div class="b" style="left:687px;top:567px;width:9px;height:6px;background:#dad7d6"></div>
<div class="b" style="left:696px;top:567px;width:9px;height:6px;background:#dfdcdb"></div>
<div class="b" style="left:705px;top:567px;width:9px;height:6px;background:#e3e6eb"></div>
<div class="b" style="left:714px;top:567px;width:9px;height:6px;background:#dedfe2"></div>
<div class="b" style="left:723px;top:567px;width:9px;height:6px;background:#d4d7dc"></div>
<div class="b" style="left:732px;top:567px;width:9px;height:6px;background:#d9dde3"></div>
<div class="b" style="left:741px;top:567px;width:9px;height:6px;background:#dad7d6"></div>
<div class="b" style="left:750px;top:567px;width:9px;height:6px;background:#d4d0ce"></div>
<div class="b" style="left:759px;top:567px;width:9px;height:6px;background:#dcdcde"></div>
<div class="t" style="left:565.58px;top:584px;font-size:11.5px;color:#3434c8;transform:scaleX(0.9300);transform-origin:0 0;">Ethnicity</div>
<svg class="b" style="left:559.6px;top:585.0px" width="6" height="6" viewBox="0 0 6 6"><path d="M3 0.3 L3.7 2.1 L5.6 2.2 L4.1 3.4 L4.7 5.3 L3 4.2 L1.3 5.3 L1.9 3.4 L0.4 2.2 L2.3 2.1 Z" fill="#e02020"/></svg>
<div class="b" style="left:609px;top:579px;width:47px;height:21px;background:#fff;border:1px solid #666666"></div>
<div class="b" style="left:639px;top:581px;width:14px;height:18px;background:#c2d6f8"></div>
<svg class="b" style="left:641.0px;top:587.0px" width="10" height="6" viewBox="0 0 10 6"><path d="M1 1 L5.0 5.0 L9 1" stroke="#1a2c80" stroke-width="2.4" fill="none"/></svg>
<div class="b" style="left:611px;top:583px;width:9px;height:9px;background:#cdced1"></div>
<div class="b" style="left:620px;top:583px;width:9px;height:9px;background:#c5c8cd"></div>
<div class="b" style="left:611px;top:592px;width:9px;height:5px;background:#e7eaef"></div>
<div class="b" style="left:620px;top:592px;width:9px;height:5px;background:#e0dcda"></div>
<div class="b" style="left:656px;top:579px;width:124px;height:21px;background:#fff;border:1px solid #666666"></div>
<div class="b" style="left:660px;top:582px;width:9px;height:9px;background:#cfcecf"></div>
<div class="b" style="left:669px;top:582px;width:9px;height:9px;background:#cecac8"></div>
<div class="b" style="left:678px;top:582px;width:9px;height:9px;background:#cbced3"></div>
<div class="b" style="left:687px;top:582px;width:9px;height:9px;background:#dddcdd"></div>
<div class="b" style="left:696px;top:582px;width:9px;height:9px;background:#d0cdcc"></div>
<div class="b" style="left:705px;top:582px;width:9px;height:9px;background:#d7d5d5"></div>
<div class="b" style="left:714px;top:582px;width:9px;height:9px;background:#c4c6ca"></div>
<div class="b" style="left:723px;top:582px;width:9px;height:9px;background:#c9c6c5"></div>
<div class="b" style="left:732px;top:582px;width:9px;height:9px;background:#dedbda"></div>
<div class="b" style="left:741px;top:582px;width:9px;height:9px;background:#d2d2d4"></div>
<div class="b" style="left:750px;top:582px;width:9px;height:9px;background:#dbdde1"></div>
<div class="b" style="left:759px;top:582px;width:9px;height:9px;background:#d4d3d4"></div>
<div class="b" style="left:768px;top:582px;width:9px;height:9px;background:#d3d2d3"></div>
<div class="b" style="left:660px;top:591px;width:9px;height:6px;background:#d2d1d2"></div>
<div class="b" style="left:669px;top:591px;width:9px;height:6px;background:#cfcecf"></div>
<div class="b" style="left:678px;top:591px;width:9px;height:6px;background:#e7e6e7"></div>
<div class="b" style="left:687px;top:591px;width:9px;height:6px;background:#d7dadf"></div>
<div class="b" style="left:696px;top:591px;width:9px;height:6px;background:#d0d4da"></div>
<div class="b" style="left:705px;top:591px;width:9px;height:6px;background:#e5e5e7"></div>
<div class="b" style="left:714px;top:591px;width:9px;height:6px;background:#d7d6d7"></div>
<div class="b" style="left:723px;top:591px;width:9px;height:6px;background:#d2d0d0"></div>
<div class="b" style="left:732px;top:591px;width:9px;height:6px;background:#d7dadf"></div>
<div class="b" style="left:741px;top:591px;width:9px;height:6px;background:#dbd9d9"></div>
<div class="b" style="left:750px;top:591px;width:9px;height:6px;background:#e6e6e8"></div>
<div class="b" style="left:759px;top:591px;width:9px;height:6px;background:#cfcfd1"></div>
<div class="b" style="left:768px;top:591px;width:9px;height:6px;background:#cdd1d7"></div>
<div class="t" style="left:567.36px;top:607px;font-size:11.5px;color:#3434c8;transform:scaleX(0.9300);transform-origin:0 0;">Religion</div>
<svg class="b" style="left:561.4px;top:608.0px" width="6" height="6" viewBox="0 0 6 6"><path d="M3 0.3 L3.7 2.1 L5.6 2.2 L4.1 3.4 L4.7 5.3 L3 4.2 L1.3 5.3 L1.9 3.4 L0.4 2.2 L2.3 2.1 Z" fill="#e02020"/></svg>
<div class="b" style="left:609px;top:602px;width:47px;height:21px;background:#fff;border:1px solid #666666"></div>
<div class="b" style="left:639px;top:604px;width:14px;height:18px;background:#c2d6f8"></div>
<svg class="b" style="left:641.0px;top:610.0px" width="10" height="6" viewBox="0 0 10 6"><path d="M1 1 L5.0 5.0 L9 1" stroke="#1a2c80" stroke-width="2.4" fill="none"/></svg>
<div class="b" style="left:611px;top:606px;width:9px;height:9px;background:#d7d7d9"></div>
<div class="b" style="left:620px;top:606px;width:9px;height:9px;background:#d4d6da"></div>
<div class="b" style="left:611px;top:615px;width:9px;height:5px;background:#dfdfe1"></div>
<div class="b" style="left:620px;top:615px;width:9px;height:5px;background:#e9e5e3"></div>
<div class="b" style="left:656px;top:602px;width:124px;height:21px;background:#fff;border:1px solid #666666"></div>
<div class="b" style="left:660px;top:605px;width:9px;height:9px;background:#cfd0d3"></div>
<div class="b" style="left:669px;top:605px;width:9px;height:9px;background:#dfdedf"></div>
<div class="b" style="left:678px;top:605px;width:9px;height:9px;background:#cfd3d9"></div>
<div class="b" style="left:687px;top:605px;width:9px;height:9px;background:#e0dede"></div>
<div class="b" style="left:696px;top:605px;width:9px;height:9px;background:#dbd7d5"></div>
<div class="b" style="left:705px;top:605px;width:9px;height:9px;background:#c9ccd1"></div>
<div class="b" style="left:714px;top:605px;width:9px;height:9px;background:#c9c7c7"></div>
<div class="b" style="left:723px;top:605px;width:9px;height:9px;background:#d2d4d8"></div>
<div class="b" style="left:732px;top:605px;width:9px;height:9px;background:#dadadc"></div>
<div class="b" style="left:741px;top:605px;width:9px;height:9px;background:#d1d5db"></div>
<div class="b" style="left:660px;top:614px;width:9px;height:6px;background:#dddfe3"></div>
<div class="b" style="left:669px;top:614px;width:9px;height:6px;background:#d6d3d2"></div>
<div class="b" style="left:678px;top:614px;width:9px;height:6px;background:#dcdbdc"></div>
<div class="b" style="left:687px;top:614px;width:9px;height:6px;background:#d7d7d9"></div>
<div class="b" style="left:696px;top:614px;width:9px;height:6px;background:#d6d6d8"></div>
<div class="b" style="left:705px;top:614px;width:9px;height:6px;background:#d9dadd"></div>
<div class="b" style="left:714px;top:614px;width:9px;height:6px;background:#dad7d6"></div>
<div class="b" style="left:723px;top:614px;width:9px;height:6px;background:#e1dfdf"></div>
<div class="b" style="left:732px;top:614px;width:9px;height:6px;background:#cfd1d5"></div>
<div class="b" style="left:741px;top:614px;width:9px;height:6px;background:#e0e2e6"></div>
<div class="t" style="left:1048.70px;top:424px;font-size:11.5px;color:#1e1e1e;transform:scaleX(0.9300);transform-origin:0 0;">Family Tree Complete</div>
<div class="t" style="left:1089.10px;top:448px;font-size:11.5px;color:#1e1e1e;transform:scaleX(0.9300);transform-origin:0 0;">Bio Complete</div>
<svg class="b" style="left:1158px;top:420px" width="13" height="13" viewBox="0 0 13 13"><rect x="0.5" y="0.5" width="12" height="12" fill="#fff" stroke="#606060"/><path d="M1.8 7 L5.3 10.3 L10.3 3" stroke="#111" stroke-width="2" fill="none"/></svg>
<svg class="b" style="left:1158px;top:444px" width="13" height="13" viewBox="0 0 13 13"><rect x="0.5" y="0.5" width="12" height="12" fill="#fff" stroke="#606060"/><path d="M1.8 7 L5.3 10.3 L10.3 3" stroke="#111" stroke-width="2" fill="none"/></svg>
<div class="b" style="left:902px;top:505px;width:281px;height:26px;border:3px solid #e64646"></div>
<div class="t" style="left:909.30px;top:514px;font-size:11.5px;color:#1e1e1e;transform:scaleX(0.9556);transform-origin:0 0;">Asylum Country Arrival Date</div>
<div class="b" style="left:1050px;top:508px;width:100px;height:20px;background:#fff;border:1px solid #666666"></div>
<div class="b" style="left:1052px;top:512px;width:9px;height:9px;background:#c3c4c7"></div>
<div class="b" style="left:1061px;top:512px;width:9px;height:9px;background:#d5d2d1"></div>
<div class="b" style="left:1070px;top:512px;width:9px;height:9px;background:#d2d3d6"></div>
<div class="b" style="left:1079px;top:512px;width:9px;height:9px;background:#d1d0d1"></div>
<div class="b" style="left:1088px;top:512px;width:9px;height:9px;background:#dddad9"></div>
<div class="b" style="left:1097px;top:512px;width:9px;height:9px;background:#cdcfd3"></div>
<div class="b" style="left:1106px;top:512px;width:9px;height:9px;background:#d2d3d6"></div>
<div class="b" style="left:1115px;top:512px;width:9px;height:9px;background:#c6c9ce"></div>
<div class="b" style="left:1052px;top:521px;width:9px;height:5px;background:#deddde"></div>
<div class="b" style="left:1061px;top:521px;width:9px;height:5px;background:#e6e9ee"></div>
<div class="b" style="left:1070px;top:521px;width:9px;height:5px;background:#e1e2e5"></div>
<div class="b" style="left:1079px;top:521px;width:9px;height:5px;background:#e3e3e5"></div>
<div class="b" style="left:1088px;top:521px;width:9px;height:5px;background:#e9eaed"></div>
<div class="b" style="left:1097px;top:521px;width:9px;height:5px;background:#dad8d8"></div>
<div class="b" style="left:1106px;top:521px;width:9px;height:5px;background:#e6e4e4"></div>
<div class="b" style="left:1115px;top:521px;width:9px;height:5px;background:#f3efed"></div>
<div class="b" style="left:1124px;top:512px;width:9px;height:14px;background:#f4f8fd"></div>
<svg class="b" style="left:1153px;top:508px" width="21" height="22" viewBox="0 0 21 22">
<rect x="0" y="0" width="20" height="21" fill="#ecece4"/>
<rect x="0" y="0" width="20" height="5" fill="#3c64ee"/>
<path d="M0 9 H20 M0 13 H20 M0 17 H20 M4 5 V21 M8 5 V21 M12 5 V21 M16 5 V21" stroke="#b4b4ac" stroke-width="0.8"/>
<path d="M20.5 1 V21.5 H2" stroke="#303030" stroke-width="1" fill="none"/>
<path d="M4 9 L15 9 L9.5 15 Z" fill="#000"/>
</svg>
<div class="t" style="left:1076.61px;top:538px;font-size:11.5px;color:#1e1e1e;transform:scaleX(0.9300);transform-origin:0 0;">RE Code</div>
<div class="b" style="left:1123px;top:534px;width:51px;height:18px;background:#fff;border:1px solid #666666"></div>
<svg class="b" style="left:1158.0px;top:539.0px" width="12" height="8" viewBox="0 0 12 8"><path d="M1 1 L6.0 7.0 L11 1" stroke="#1a1a1a" stroke-width="2" fill="none"/></svg>
<div class="t" style="left:1127.00px;top:537px;font-size:13.1px;color:#111;-webkit-text-stroke:0;">RE1</div>
<div class="b" style="left:983px;top:552px;width:200px;height:26px;border:3px solid #e64646"></div>
<div class="t" style="left:998.62px;top:561px;font-size:11.5px;color:#1e1e1e;transform:scaleX(0.9300);transform-origin:0 0;">Marital Status</div>
<svg class="b" style="left:992.6px;top:562.0px" width="6" height="6" viewBox="0 0 6 6"><path d="M3 0.3 L3.7 2.1 L5.6 2.2 L4.1 3.4 L4.7 5.3 L3 4.2 L1.3 5.3 L1.9 3.4 L0.4 2.2 L2.3 2.1 Z" fill="#c01818"/></svg>
<div class="b" style="left:1067px;top:556px;width:107px;height:19px;background:#fff;border:1px solid #666666"></div>
<svg class="b" style="left:1158.0px;top:561.5px" width="12" height="8" viewBox="0 0 12 8"><path d="M1 1 L6.0 7.0 L11 1" stroke="#1a1a1a" stroke-width="2" fill="none"/></svg>
<div class="t" style="left:1071.00px;top:559px;font-size:13.1px;color:#111;-webkit-text-stroke:0;">Married</div>
<div class="t" style="left:1074.84px;top:584px;font-size:11.5px;color:#1e1e1e;transform:scaleX(0.9300);transform-origin:0 0;">Deceased</div>
<svg class="b" style="left:1068.8px;top:585.0px" width="6" height="6" viewBox="0 0 6 6"><path d="M3 0.3 L3.7 2.1 L5.6 2.2 L4.1 3.4 L4.7 5.3 L3 4.2 L1.3 5.3 L1.9 3.4 L0.4 2.2 L2.3 2.1 Z" fill="#c01818"/></svg>
<div class="b" style="left:1126px;top:580px;width:48px;height:19px;background:#fff;border:1px solid #666666"></div>
<svg class="b" style="left:1158.0px;top:585.5px" width="12" height="8" viewBox="0 0 12 8"><path d="M1 1 L6.0 7.0 L11 1" stroke="#1a1a1a" stroke-width="2" fill="none"/></svg>
<div class="t" style="left:1130.00px;top:583px;font-size:13.1px;color:#111;-webkit-text-stroke:0;">No</div>
<div class="t" style="left:500.40px;top:703px;font-size:11.5px;color:#1e1e1e;transform:scaleX(0.9088);transform-origin:0 0;">WRAPS Case Member Sequence No.</div>
<div class="t" style="left:679.00px;top:703px;font-size:11.5px;color:#101010;font-weight:bold;-webkit-text-stroke:0.05px currentColor;transform:scaleX(0.7819);transform-origin:0 0;">1</div>
<div class="t" style="left:794.00px;top:703px;font-size:11.5px;color:#1e1e1e;transform:scaleX(0.9192);transform-origin:0 0;">Last Update</div>
<div class="t" style="left:854.00px;top:703px;font-size:11.5px;color:#101010;font-weight:bold;-webkit-text-stroke:0.05px currentColor;transform:scaleX(0.8982);transform-origin:0 0;">25 Jan 2017</div>
<div class="t" style="left:1031.00px;top:703px;font-size:11.5px;color:#1e1e1e;transform:scaleX(0.9686);transform-origin:0 0;">By</div>
<div class="b" style="left:1046px;top:700px;width:9px;height:9px;background:#a4a2a2"></div>
<div class="b" style="left:1055px;top:700px;width:9px;height:9px;background:#a5a4a5"></div>
<div class="b" style="left:1064px;top:700px;width:9px;height:9px;background:#b0b4ba"></div>
<div class="b" style="left:1073px;top:700px;width:9px;height:9px;background:#ababad"></div>
<div class="b" style="left:1082px;top:700px;width:9px;height:9px;background:#afaeaf"></div>
<div class="b" style="left:1091px;top:700px;width:9px;height:9px;background:#a4a09e"></div>
<div class="b" style="left:1046px;top:709px;width:9px;height:9px;background:#d8d9dc"></div>
<div class="b" style="left:1055px;top:709px;width:9px;height:9px;background:#cbcbcd"></div>
<div class="b" style="left:1064px;top:709px;width:9px;height:9px;background:#d2d0d0"></div>
<div class="b" style="left:1073px;top:709px;width:9px;height:9px;background:#d8d5d4"></div>
<div class="b" style="left:1082px;top:709px;width:9px;height:9px;background:#d6d6d8"></div>
<div class="b" style="left:1091px;top:709px;width:9px;height:9px;background:#c7c9cd"></div>
<div class="b" style="left:568px;top:746px;width:64px;height:23px;background:linear-gradient(#f2f2f2,#dedede);border:1px solid #707070"></div>
<div class="t" style="left:578.84px;top:751px;font-size:13.6px;color:#1a1a1a;-webkit-text-stroke:0;">Submit</div>
<div class="b" style="left:648px;top:746px;width:57px;height:23px;background:linear-gradient(#f2f2f2,#dedede);border:1px solid #707070"></div>
<div class="t" style="left:658.74px;top:751px;font-size:13.6px;color:#1a1a1a;-webkit-text-stroke:0;">Reset</div>
<div class="b" style="left:721px;top:746px;width:63px;height:23px;background:linear-gradient(#f2f2f2,#dedede);border:1px solid #707070"></div>
<div class="t" style="left:731.33px;top:751px;font-size:13.6px;color:#1a1a1a;-webkit-text-stroke:0;">Cancel</div>
<div class="t" style="left:787.60px;top:753px;font-size:11px;color:#3535d0;transform:scaleX(0.9592);transform-origin:0 0;-webkit-text-stroke:0;">Help</div>
</body></html>
